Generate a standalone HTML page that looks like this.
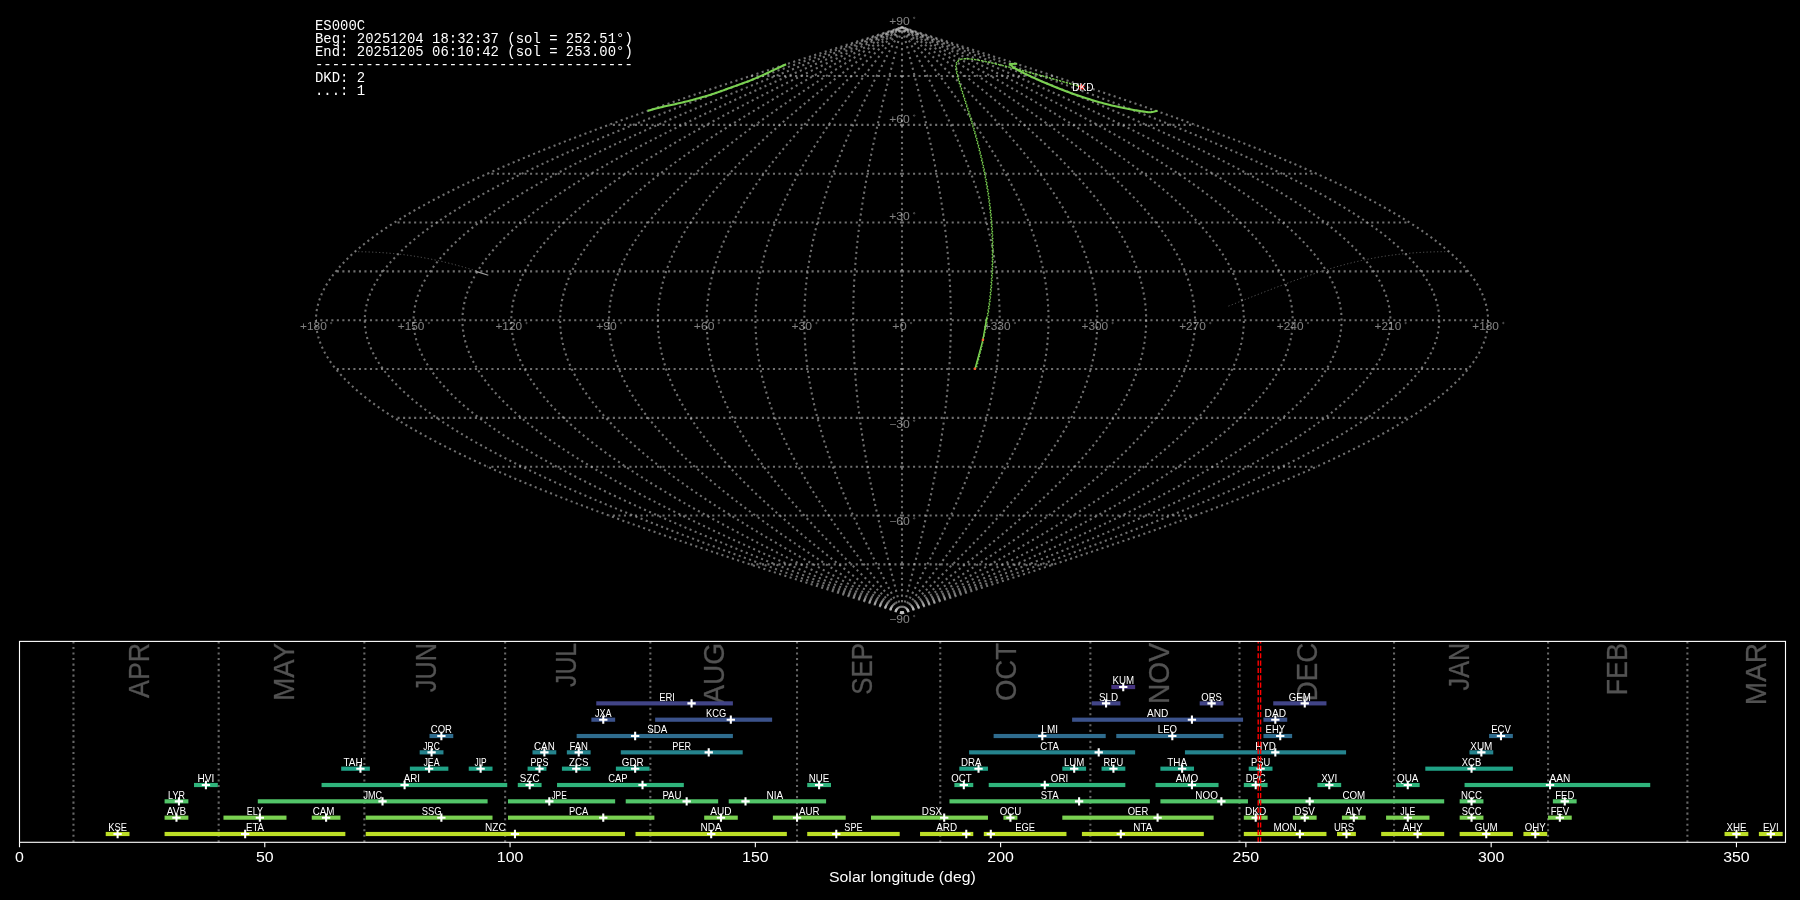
<!DOCTYPE html>
<html><head><meta charset="utf-8"><title>ES000C shower association</title>
<style>html,body{margin:0;padding:0;background:#000;width:1800px;height:900px;overflow:hidden}svg{display:block;will-change:transform}</style>
</head><body>
<svg width="1800" height="900" viewBox="0 0 1800 900">
<rect x="0" y="0" width="1800" height="900" fill="#000"/>
<g stroke="#c0c0c0" stroke-opacity="0.58" stroke-width="2.083" stroke-dasharray="2.083 3.4375" fill="none"><path d="M902.00 613.24L902.00 609.98L902.00 606.73L902.00 603.47L902.00 600.22L902.00 596.96L902.00 593.70L902.00 590.45L902.00 587.19L902.00 583.94L902.00 580.68L902.00 577.42L902.00 574.17L902.00 570.91L902.00 567.66L902.00 564.40L902.00 561.14L902.00 557.89L902.00 554.63L902.00 551.38L902.00 548.12L902.00 544.86L902.00 541.61L902.00 538.35L902.00 535.10L902.00 531.84L902.00 528.58L902.00 525.33L902.00 522.07L902.00 518.82L902.00 515.56L902.00 512.30L902.00 509.05L902.00 505.79L902.00 502.54L902.00 499.28L902.00 496.02L902.00 492.77L902.00 489.51L902.00 486.26L902.00 483.00L902.00 479.74L902.00 476.49L902.00 473.23L902.00 469.98L902.00 466.72L902.00 463.46L902.00 460.21L902.00 456.95L902.00 453.70L902.00 450.44L902.00 447.18L902.00 443.93L902.00 440.67L902.00 437.42L902.00 434.16L902.00 430.90L902.00 427.65L902.00 424.39L902.00 421.14L902.00 417.88L902.00 414.62L902.00 411.37L902.00 408.11L902.00 404.86L902.00 401.60L902.00 398.34L902.00 395.09L902.00 391.83L902.00 388.58L902.00 385.32L902.00 382.06L902.00 378.81L902.00 375.55L902.00 372.30L902.00 369.04L902.00 365.78L902.00 362.53L902.00 359.27L902.00 356.02L902.00 352.76L902.00 349.50L902.00 346.25L902.00 342.99L902.00 339.74L902.00 336.48L902.00 333.22L902.00 329.97L902.00 326.71L902.00 323.46L902.00 320.20L902.00 316.94L902.00 313.69L902.00 310.43L902.00 307.18L902.00 303.92L902.00 300.66L902.00 297.41L902.00 294.15L902.00 290.90L902.00 287.64L902.00 284.38L902.00 281.13L902.00 277.87L902.00 274.62L902.00 271.36L902.00 268.10L902.00 264.85L902.00 261.59L902.00 258.34L902.00 255.08L902.00 251.82L902.00 248.57L902.00 245.31L902.00 242.06L902.00 238.80L902.00 235.54L902.00 232.29L902.00 229.03L902.00 225.78L902.00 222.52L902.00 219.26L902.00 216.01L902.00 212.75L902.00 209.50L902.00 206.24L902.00 202.98L902.00 199.73L902.00 196.47L902.00 193.22L902.00 189.96L902.00 186.70L902.00 183.45L902.00 180.19L902.00 176.94L902.00 173.68L902.00 170.42L902.00 167.17L902.00 163.91L902.00 160.66L902.00 157.40L902.00 154.14L902.00 150.89L902.00 147.63L902.00 144.38L902.00 141.12L902.00 137.86L902.00 134.61L902.00 131.35L902.00 128.10L902.00 124.84L902.00 121.58L902.00 118.33L902.00 115.07L902.00 111.82L902.00 108.56L902.00 105.30L902.00 102.05L902.00 98.79L902.00 95.54L902.00 92.28L902.00 89.02L902.00 85.77L902.00 82.51L902.00 79.26L902.00 76.00L902.00 72.74L902.00 69.49L902.00 66.23L902.00 62.98L902.00 59.72L902.00 56.46L902.00 53.21L902.00 49.95L902.00 46.70L902.00 43.44L902.00 40.18L902.00 36.93L902.00 33.67L902.00 30.42L902.00 27.16"/><path d="M902.00 613.24L901.15 609.98L900.30 606.73L899.44 603.47L898.59 600.22L897.74 596.96L896.89 593.70L896.05 590.45L895.20 587.19L894.36 583.94L893.52 580.68L892.68 577.42L891.85 574.17L891.01 570.91L890.18 567.66L889.36 564.40L888.54 561.14L887.72 557.89L886.91 554.63L886.10 551.38L885.30 548.12L884.50 544.86L883.70 541.61L882.92 538.35L882.13 535.10L881.36 531.84L880.59 528.58L879.83 525.33L879.07 522.07L878.32 518.82L877.58 515.56L876.85 512.30L876.12 509.05L875.40 505.79L874.69 502.54L873.99 499.28L873.29 496.02L872.61 492.77L871.93 489.51L871.26 486.26L870.61 483.00L869.96 479.74L869.32 476.49L868.69 473.23L868.07 469.98L867.46 466.72L866.87 463.46L866.28 460.21L865.70 456.95L865.14 453.70L864.59 450.44L864.04 447.18L863.51 443.93L862.99 440.67L862.49 437.42L861.99 434.16L861.51 430.90L861.04 427.65L860.58 424.39L860.14 421.14L859.70 417.88L859.28 414.62L858.88 411.37L858.48 408.11L858.10 404.86L857.74 401.60L857.38 398.34L857.04 395.09L856.72 391.83L856.40 388.58L856.11 385.32L855.82 382.06L855.55 378.81L855.29 375.55L855.05 372.30L854.82 369.04L854.61 365.78L854.41 362.53L854.23 359.27L854.06 356.02L853.90 352.76L853.76 349.50L853.64 346.25L853.52 342.99L853.43 339.74L853.35 336.48L853.28 333.22L853.23 329.97L853.19 326.71L853.17 323.46L853.16 320.20L853.17 316.94L853.19 313.69L853.23 310.43L853.28 307.18L853.35 303.92L853.43 300.66L853.52 297.41L853.64 294.15L853.76 290.90L853.90 287.64L854.06 284.38L854.23 281.13L854.41 277.87L854.61 274.62L854.82 271.36L855.05 268.10L855.29 264.85L855.55 261.59L855.82 258.34L856.11 255.08L856.40 251.82L856.72 248.57L857.04 245.31L857.38 242.06L857.74 238.80L858.10 235.54L858.48 232.29L858.88 229.03L859.28 225.78L859.70 222.52L860.14 219.26L860.58 216.01L861.04 212.75L861.51 209.50L861.99 206.24L862.49 202.98L862.99 199.73L863.51 196.47L864.04 193.22L864.59 189.96L865.14 186.70L865.70 183.45L866.28 180.19L866.87 176.94L867.46 173.68L868.07 170.42L868.69 167.17L869.32 163.91L869.96 160.66L870.61 157.40L871.26 154.14L871.93 150.89L872.61 147.63L873.29 144.38L873.99 141.12L874.69 137.86L875.40 134.61L876.12 131.35L876.85 128.10L877.58 124.84L878.32 121.58L879.07 118.33L879.83 115.07L880.59 111.82L881.36 108.56L882.13 105.30L882.92 102.05L883.70 98.79L884.50 95.54L885.30 92.28L886.10 89.02L886.91 85.77L887.72 82.51L888.54 79.26L889.36 76.00L890.18 72.74L891.01 69.49L891.85 66.23L892.68 62.98L893.52 59.72L894.36 56.46L895.20 53.21L896.05 49.95L896.89 46.70L897.74 43.44L898.59 40.18L899.44 36.93L900.30 33.67L901.15 30.42L902.00 27.16"/><path d="M902.00 613.24L900.30 609.98L898.59 606.73L896.89 603.47L895.19 600.22L893.49 596.96L891.79 593.70L890.10 590.45L888.41 587.19L886.72 583.94L885.04 580.68L883.36 577.42L881.69 574.17L880.03 570.91L878.37 567.66L876.72 564.40L875.08 561.14L873.44 557.89L871.82 554.63L870.20 551.38L868.59 548.12L866.99 544.86L865.41 541.61L863.83 538.35L862.27 535.10L860.72 531.84L859.18 528.58L857.65 525.33L856.14 522.07L854.64 518.82L853.16 515.56L851.69 512.30L850.24 509.05L848.80 505.79L847.38 502.54L845.97 499.28L844.59 496.02L843.21 492.77L841.86 489.51L840.53 486.26L839.21 483.00L837.92 479.74L836.64 476.49L835.38 473.23L834.15 469.98L832.93 466.72L831.73 463.46L830.56 460.21L829.41 456.95L828.28 453.70L827.17 450.44L826.09 447.18L825.03 443.93L823.99 440.67L822.98 437.42L821.99 434.16L821.02 430.90L820.08 427.65L819.16 424.39L818.27 421.14L817.41 417.88L816.57 414.62L815.75 411.37L814.97 408.11L814.21 404.86L813.47 401.60L812.76 398.34L812.09 395.09L811.43 391.83L810.81 388.58L810.21 385.32L809.64 382.06L809.10 378.81L808.59 375.55L808.10 372.30L807.65 369.04L807.22 365.78L806.82 362.53L806.45 359.27L806.11 356.02L805.80 352.76L805.52 349.50L805.27 346.25L805.05 342.99L804.86 339.74L804.69 336.48L804.56 333.22L804.45 329.97L804.38 326.71L804.33 323.46L804.32 320.20L804.33 316.94L804.38 313.69L804.45 310.43L804.56 307.18L804.69 303.92L804.86 300.66L805.05 297.41L805.27 294.15L805.52 290.90L805.80 287.64L806.11 284.38L806.45 281.13L806.82 277.87L807.22 274.62L807.65 271.36L808.10 268.10L808.59 264.85L809.10 261.59L809.64 258.34L810.21 255.08L810.81 251.82L811.43 248.57L812.09 245.31L812.76 242.06L813.47 238.80L814.21 235.54L814.97 232.29L815.75 229.03L816.57 225.78L817.41 222.52L818.27 219.26L819.16 216.01L820.08 212.75L821.02 209.50L821.99 206.24L822.98 202.98L823.99 199.73L825.03 196.47L826.09 193.22L827.17 189.96L828.28 186.70L829.41 183.45L830.56 180.19L831.73 176.94L832.93 173.68L834.15 170.42L835.38 167.17L836.64 163.91L837.92 160.66L839.21 157.40L840.53 154.14L841.86 150.89L843.21 147.63L844.59 144.38L845.97 141.12L847.38 137.86L848.80 134.61L850.24 131.35L851.69 128.10L853.16 124.84L854.64 121.58L856.14 118.33L857.65 115.07L859.18 111.82L860.72 108.56L862.27 105.30L863.83 102.05L865.41 98.79L866.99 95.54L868.59 92.28L870.20 89.02L871.82 85.77L873.44 82.51L875.08 79.26L876.72 76.00L878.37 72.74L880.03 69.49L881.69 66.23L883.36 62.98L885.04 59.72L886.72 56.46L888.41 53.21L890.10 49.95L891.79 46.70L893.49 43.44L895.19 40.18L896.89 36.93L898.59 33.67L900.30 30.42L902.00 27.16"/><path d="M902.00 613.24L899.44 609.98L896.89 606.73L894.33 603.47L891.78 600.22L889.23 596.96L886.68 593.70L884.14 590.45L881.61 587.19L879.08 583.94L876.56 580.68L874.04 577.42L871.54 574.17L869.04 570.91L866.55 567.66L864.08 564.40L861.61 561.14L859.16 557.89L856.72 554.63L854.30 551.38L851.89 548.12L849.49 544.86L847.11 541.61L844.75 538.35L842.40 535.10L840.08 531.84L837.77 528.58L835.48 525.33L833.21 522.07L830.97 518.82L828.74 515.56L826.54 512.30L824.36 509.05L822.20 505.79L820.07 502.54L817.96 499.28L815.88 496.02L813.82 492.77L811.79 489.51L809.79 486.26L807.82 483.00L805.87 479.74L803.96 476.49L802.07 473.23L800.22 469.98L798.39 466.72L796.60 463.46L794.84 460.21L793.11 456.95L791.42 453.70L789.76 450.44L788.13 447.18L786.54 443.93L784.98 440.67L783.46 437.42L781.98 434.16L780.53 430.90L779.12 427.65L777.74 424.39L776.41 421.14L775.11 417.88L773.85 414.62L772.63 411.37L771.45 408.11L770.31 404.86L769.21 401.60L768.15 398.34L767.13 395.09L766.15 391.83L765.21 388.58L764.32 385.32L763.46 382.06L762.65 378.81L761.88 375.55L761.16 372.30L760.47 369.04L759.83 365.78L759.24 362.53L758.68 359.27L758.17 356.02L757.71 352.76L757.28 349.50L756.91 346.25L756.57 342.99L756.28 339.74L756.04 336.48L755.84 333.22L755.68 329.97L755.57 326.71L755.50 323.46L755.48 320.20L755.50 316.94L755.57 313.69L755.68 310.43L755.84 307.18L756.04 303.92L756.28 300.66L756.57 297.41L756.91 294.15L757.28 290.90L757.71 287.64L758.17 284.38L758.68 281.13L759.24 277.87L759.83 274.62L760.47 271.36L761.16 268.10L761.88 264.85L762.65 261.59L763.46 258.34L764.32 255.08L765.21 251.82L766.15 248.57L767.13 245.31L768.15 242.06L769.21 238.80L770.31 235.54L771.45 232.29L772.63 229.03L773.85 225.78L775.11 222.52L776.41 219.26L777.74 216.01L779.12 212.75L780.53 209.50L781.98 206.24L783.46 202.98L784.98 199.73L786.54 196.47L788.13 193.22L789.76 189.96L791.42 186.70L793.11 183.45L794.84 180.19L796.60 176.94L798.39 173.68L800.22 170.42L802.07 167.17L803.96 163.91L805.87 160.66L807.82 157.40L809.79 154.14L811.79 150.89L813.82 147.63L815.88 144.38L817.96 141.12L820.07 137.86L822.20 134.61L824.36 131.35L826.54 128.10L828.74 124.84L830.97 121.58L833.21 118.33L835.48 115.07L837.77 111.82L840.08 108.56L842.40 105.30L844.75 102.05L847.11 98.79L849.49 95.54L851.89 92.28L854.30 89.02L856.72 85.77L859.16 82.51L861.61 79.26L864.08 76.00L866.55 72.74L869.04 69.49L871.54 66.23L874.04 62.98L876.56 59.72L879.08 56.46L881.61 53.21L884.14 49.95L886.68 46.70L889.23 43.44L891.78 40.18L894.33 36.93L896.89 33.67L899.44 30.42L902.00 27.16"/><path d="M902.00 613.24L898.59 609.98L895.18 606.73L891.78 603.47L888.37 600.22L884.97 596.96L881.58 593.70L878.19 590.45L874.81 587.19L871.44 583.94L868.08 580.68L864.72 577.42L861.38 574.17L858.05 570.91L854.74 567.66L851.44 564.40L848.15 561.14L844.88 557.89L841.63 554.63L838.40 551.38L835.18 548.12L831.99 544.86L828.82 541.61L825.67 538.35L822.54 535.10L819.44 531.84L816.36 528.58L813.31 525.33L810.28 522.07L807.29 518.82L804.32 515.56L801.38 512.30L798.47 509.05L795.60 505.79L792.76 502.54L789.95 499.28L787.17 496.02L784.43 492.77L781.72 489.51L779.06 486.26L776.43 483.00L773.83 479.74L771.28 476.49L768.76 473.23L766.29 469.98L763.86 466.72L761.47 463.46L759.12 460.21L756.82 456.95L754.56 453.70L752.35 450.44L750.18 447.18L748.05 443.93L745.98 440.67L743.95 437.42L741.97 434.16L740.04 430.90L738.16 427.65L736.33 424.39L734.54 421.14L732.81 417.88L731.13 414.62L729.51 411.37L727.93 408.11L726.41 404.86L724.94 401.60L723.53 398.34L722.17 395.09L720.87 391.83L719.62 388.58L718.42 385.32L717.28 382.06L716.20 378.81L715.18 375.55L714.21 372.30L713.30 369.04L712.44 365.78L711.65 362.53L710.91 359.27L710.23 356.02L709.61 352.76L709.05 349.50L708.54 346.25L708.10 342.99L707.71 339.74L707.38 336.48L707.12 333.22L706.91 329.97L706.76 326.71L706.67 323.46L706.64 320.20L706.67 316.94L706.76 313.69L706.91 310.43L707.12 307.18L707.38 303.92L707.71 300.66L708.10 297.41L708.54 294.15L709.05 290.90L709.61 287.64L710.23 284.38L710.91 281.13L711.65 277.87L712.44 274.62L713.30 271.36L714.21 268.10L715.18 264.85L716.20 261.59L717.28 258.34L718.42 255.08L719.62 251.82L720.87 248.57L722.17 245.31L723.53 242.06L724.94 238.80L726.41 235.54L727.93 232.29L729.51 229.03L731.13 225.78L732.81 222.52L734.54 219.26L736.33 216.01L738.16 212.75L740.04 209.50L741.97 206.24L743.95 202.98L745.98 199.73L748.05 196.47L750.18 193.22L752.35 189.96L754.56 186.70L756.82 183.45L759.12 180.19L761.47 176.94L763.86 173.68L766.29 170.42L768.76 167.17L771.28 163.91L773.83 160.66L776.43 157.40L779.06 154.14L781.72 150.89L784.43 147.63L787.17 144.38L789.95 141.12L792.76 137.86L795.60 134.61L798.47 131.35L801.38 128.10L804.32 124.84L807.29 121.58L810.28 118.33L813.31 115.07L816.36 111.82L819.44 108.56L822.54 105.30L825.67 102.05L828.82 98.79L831.99 95.54L835.18 92.28L838.40 89.02L841.63 85.77L844.88 82.51L848.15 79.26L851.44 76.00L854.74 72.74L858.05 69.49L861.38 66.23L864.72 62.98L868.08 59.72L871.44 56.46L874.81 53.21L878.19 49.95L881.58 46.70L884.97 43.44L888.37 40.18L891.78 36.93L895.18 33.67L898.59 30.42L902.00 27.16"/><path d="M902.00 613.24L897.74 609.98L893.48 606.73L889.22 603.47L884.97 600.22L880.72 596.96L876.47 593.70L872.24 590.45L868.01 587.19L863.80 583.94L859.60 580.68L855.40 577.42L851.23 574.17L847.07 570.91L842.92 567.66L838.80 564.40L834.69 561.14L830.60 557.89L826.54 554.63L822.50 551.38L818.48 548.12L814.49 544.86L810.52 541.61L806.58 538.35L802.67 535.10L798.80 531.84L794.95 528.58L791.14 525.33L787.36 522.07L783.61 518.82L779.90 515.56L776.23 512.30L772.59 509.05L769.00 505.79L765.45 502.54L761.93 499.28L758.46 496.02L755.04 492.77L751.66 489.51L748.32 486.26L745.03 483.00L741.79 479.74L738.60 476.49L735.46 473.23L732.36 469.98L729.32 466.72L726.34 463.46L723.40 460.21L720.52 456.95L717.70 453.70L714.93 450.44L712.22 447.18L709.57 443.93L706.97 440.67L704.44 437.42L701.96 434.16L699.55 430.90L697.20 427.65L694.91 424.39L692.68 421.14L690.52 417.88L688.42 414.62L686.38 411.37L684.42 408.11L682.51 404.86L680.68 401.60L678.91 398.34L677.21 395.09L675.58 391.83L674.02 388.58L672.53 385.32L671.10 382.06L669.75 378.81L668.47 375.55L667.26 372.30L666.12 369.04L665.05 365.78L664.06 362.53L663.14 359.27L662.29 356.02L661.51 352.76L660.81 349.50L660.18 346.25L659.62 342.99L659.14 339.74L658.73 336.48L658.39 333.22L658.13 329.97L657.95 326.71L657.84 323.46L657.80 320.20L657.84 316.94L657.95 313.69L658.13 310.43L658.39 307.18L658.73 303.92L659.14 300.66L659.62 297.41L660.18 294.15L660.81 290.90L661.51 287.64L662.29 284.38L663.14 281.13L664.06 277.87L665.05 274.62L666.12 271.36L667.26 268.10L668.47 264.85L669.75 261.59L671.10 258.34L672.53 255.08L674.02 251.82L675.58 248.57L677.21 245.31L678.91 242.06L680.68 238.80L682.51 235.54L684.42 232.29L686.38 229.03L688.42 225.78L690.52 222.52L692.68 219.26L694.91 216.01L697.20 212.75L699.55 209.50L701.96 206.24L704.44 202.98L706.97 199.73L709.57 196.47L712.22 193.22L714.93 189.96L717.70 186.70L720.52 183.45L723.40 180.19L726.34 176.94L729.32 173.68L732.36 170.42L735.46 167.17L738.60 163.91L741.79 160.66L745.03 157.40L748.32 154.14L751.66 150.89L755.04 147.63L758.46 144.38L761.93 141.12L765.45 137.86L769.00 134.61L772.59 131.35L776.23 128.10L779.90 124.84L783.61 121.58L787.36 118.33L791.14 115.07L794.95 111.82L798.80 108.56L802.67 105.30L806.58 102.05L810.52 98.79L814.49 95.54L818.48 92.28L822.50 89.02L826.54 85.77L830.60 82.51L834.69 79.26L838.80 76.00L842.92 72.74L847.07 69.49L851.23 66.23L855.40 62.98L859.60 59.72L863.80 56.46L868.01 53.21L872.24 49.95L876.47 46.70L880.72 43.44L884.97 40.18L889.22 36.93L893.48 33.67L897.74 30.42L902.00 27.16"/><path d="M902.00 613.24L896.89 609.98L891.77 606.73L886.66 603.47L881.56 600.22L876.46 596.96L871.37 593.70L866.29 590.45L861.22 587.19L856.16 583.94L851.11 580.68L846.09 577.42L841.07 574.17L836.08 570.91L831.11 567.66L826.16 564.40L821.23 561.14L816.32 557.89L811.45 554.63L806.60 551.38L801.77 548.12L796.98 544.86L792.23 541.61L787.50 538.35L782.81 535.10L778.16 531.84L773.54 528.58L768.96 525.33L764.43 522.07L759.93 518.82L755.48 515.56L751.07 512.30L746.71 509.05L742.40 505.79L738.13 502.54L733.92 499.28L729.76 496.02L725.64 492.77L721.59 489.51L717.58 486.26L713.64 483.00L709.75 479.74L705.92 476.49L702.15 473.23L698.44 469.98L694.79 466.72L691.20 463.46L687.68 460.21L684.23 456.95L680.84 453.70L677.52 450.44L674.27 447.18L671.08 443.93L667.97 440.67L664.93 437.42L661.96 434.16L659.06 430.90L656.24 427.65L653.49 424.39L650.82 421.14L648.22 417.88L645.70 414.62L643.26 411.37L640.90 408.11L638.62 404.86L636.42 401.60L634.29 398.34L632.26 395.09L630.30 391.83L628.42 388.58L626.63 385.32L624.93 382.06L623.30 378.81L621.76 375.55L620.31 372.30L618.95 369.04L617.66 365.78L616.47 362.53L615.36 359.27L614.34 356.02L613.41 352.76L612.57 349.50L611.81 346.25L611.14 342.99L610.57 339.74L610.08 336.48L609.67 333.22L609.36 329.97L609.14 326.71L609.00 323.46L608.96 320.20L609.00 316.94L609.14 313.69L609.36 310.43L609.67 307.18L610.08 303.92L610.57 300.66L611.14 297.41L611.81 294.15L612.57 290.90L613.41 287.64L614.34 284.38L615.36 281.13L616.47 277.87L617.66 274.62L618.95 271.36L620.31 268.10L621.76 264.85L623.30 261.59L624.93 258.34L626.63 255.08L628.42 251.82L630.30 248.57L632.26 245.31L634.29 242.06L636.42 238.80L638.62 235.54L640.90 232.29L643.26 229.03L645.70 225.78L648.22 222.52L650.82 219.26L653.49 216.01L656.24 212.75L659.06 209.50L661.96 206.24L664.93 202.98L667.97 199.73L671.08 196.47L674.27 193.22L677.52 189.96L680.84 186.70L684.23 183.45L687.68 180.19L691.20 176.94L694.79 173.68L698.44 170.42L702.15 167.17L705.92 163.91L709.75 160.66L713.64 157.40L717.58 154.14L721.59 150.89L725.64 147.63L729.76 144.38L733.92 141.12L738.13 137.86L742.40 134.61L746.71 131.35L751.07 128.10L755.48 124.84L759.93 121.58L764.43 118.33L768.96 115.07L773.54 111.82L778.16 108.56L782.81 105.30L787.50 102.05L792.23 98.79L796.98 95.54L801.77 92.28L806.60 89.02L811.45 85.77L816.32 82.51L821.23 79.26L826.16 76.00L831.11 72.74L836.08 69.49L841.07 66.23L846.09 62.98L851.11 59.72L856.16 56.46L861.22 53.21L866.29 49.95L871.37 46.70L876.46 43.44L881.56 40.18L886.66 36.93L891.77 33.67L896.89 30.42L902.00 27.16"/><path d="M902.00 613.24L896.03 609.98L890.07 606.73L884.11 603.47L878.15 600.22L872.20 596.96L866.26 593.70L860.34 590.45L854.42 587.19L848.52 583.94L842.63 580.68L836.77 577.42L830.92 574.17L825.09 570.91L819.29 567.66L813.51 564.40L807.77 561.14L802.04 557.89L796.35 554.63L790.69 551.38L785.07 548.12L779.48 544.86L773.93 541.61L768.42 538.35L762.94 535.10L757.52 531.84L752.13 528.58L746.79 525.33L741.50 522.07L736.25 518.82L731.06 515.56L725.92 512.30L720.83 509.05L715.80 505.79L710.82 502.54L705.91 499.28L701.05 496.02L696.25 492.77L691.52 489.51L686.85 486.26L682.24 483.00L677.71 479.74L673.24 476.49L668.84 473.23L664.51 469.98L660.25 466.72L656.07 463.46L651.96 460.21L647.93 456.95L643.98 453.70L640.10 450.44L636.31 447.18L632.59 443.93L628.96 440.67L625.41 437.42L621.95 434.16L618.57 430.90L615.28 427.65L612.07 424.39L608.95 421.14L605.92 417.88L602.99 414.62L600.14 411.37L597.38 408.11L594.72 404.86L592.15 401.60L589.68 398.34L587.30 395.09L585.01 391.83L582.83 388.58L580.74 385.32L578.75 382.06L576.85 378.81L575.06 375.55L573.36 372.30L571.77 369.04L570.28 365.78L568.88 362.53L567.59 359.27L566.40 356.02L565.31 352.76L564.33 349.50L563.45 346.25L562.67 342.99L561.99 339.74L561.42 336.48L560.95 333.22L560.59 329.97L560.33 326.71L560.17 323.46L560.12 320.20L560.17 316.94L560.33 313.69L560.59 310.43L560.95 307.18L561.42 303.92L561.99 300.66L562.67 297.41L563.45 294.15L564.33 290.90L565.31 287.64L566.40 284.38L567.59 281.13L568.88 277.87L570.28 274.62L571.77 271.36L573.36 268.10L575.06 264.85L576.85 261.59L578.75 258.34L580.74 255.08L582.83 251.82L585.01 248.57L587.30 245.31L589.68 242.06L592.15 238.80L594.72 235.54L597.38 232.29L600.14 229.03L602.99 225.78L605.92 222.52L608.95 219.26L612.07 216.01L615.28 212.75L618.57 209.50L621.95 206.24L625.41 202.98L628.96 199.73L632.59 196.47L636.31 193.22L640.10 189.96L643.98 186.70L647.93 183.45L651.96 180.19L656.07 176.94L660.25 173.68L664.51 170.42L668.84 167.17L673.24 163.91L677.71 160.66L682.24 157.40L686.85 154.14L691.52 150.89L696.25 147.63L701.05 144.38L705.91 141.12L710.82 137.86L715.80 134.61L720.83 131.35L725.92 128.10L731.06 124.84L736.25 121.58L741.50 118.33L746.79 115.07L752.13 111.82L757.52 108.56L762.94 105.30L768.42 102.05L773.93 98.79L779.48 95.54L785.07 92.28L790.69 89.02L796.35 85.77L802.04 82.51L807.77 79.26L813.51 76.00L819.29 72.74L825.09 69.49L830.92 66.23L836.77 62.98L842.63 59.72L848.52 56.46L854.42 53.21L860.34 49.95L866.26 46.70L872.20 43.44L878.15 40.18L884.11 36.93L890.07 33.67L896.03 30.42L902.00 27.16"/><path d="M902.00 613.24L895.18 609.98L888.36 606.73L881.55 603.47L874.74 600.22L867.95 596.96L861.16 593.70L854.38 590.45L847.62 587.19L840.88 583.94L834.15 580.68L827.45 577.42L820.76 574.17L814.11 570.91L807.48 567.66L800.87 564.40L794.30 561.14L787.76 557.89L781.26 554.63L774.79 551.38L768.37 548.12L761.98 544.86L755.63 541.61L749.33 538.35L743.08 535.10L736.87 531.84L730.72 528.58L724.62 525.33L718.57 522.07L712.58 518.82L706.64 515.56L700.76 512.30L694.95 509.05L689.20 505.79L683.51 502.54L677.89 499.28L672.34 496.02L666.86 492.77L661.45 489.51L656.11 486.26L650.85 483.00L645.66 479.74L640.56 476.49L635.53 473.23L630.58 469.98L625.72 466.72L620.94 463.46L616.25 460.21L611.64 456.95L607.12 453.70L602.69 450.44L598.35 447.18L594.11 443.93L589.96 440.67L585.90 437.42L581.94 434.16L578.08 430.90L574.31 427.65L570.65 424.39L567.09 421.14L563.63 417.88L560.27 414.62L557.01 411.37L553.87 408.11L550.82 404.86L547.89 401.60L545.06 398.34L542.34 395.09L539.73 391.83L537.23 388.58L534.84 385.32L532.57 382.06L530.40 378.81L528.35 375.55L526.42 372.30L524.59 369.04L522.89 365.78L521.29 362.53L519.82 359.27L518.46 356.02L517.22 352.76L516.09 349.50L515.08 346.25L514.19 342.99L513.42 339.74L512.77 336.48L512.23 333.22L511.82 329.97L511.52 326.71L511.34 323.46L511.28 320.20L511.34 316.94L511.52 313.69L511.82 310.43L512.23 307.18L512.77 303.92L513.42 300.66L514.19 297.41L515.08 294.15L516.09 290.90L517.22 287.64L518.46 284.38L519.82 281.13L521.29 277.87L522.89 274.62L524.59 271.36L526.42 268.10L528.35 264.85L530.40 261.59L532.57 258.34L534.84 255.08L537.23 251.82L539.73 248.57L542.34 245.31L545.06 242.06L547.89 238.80L550.82 235.54L553.87 232.29L557.01 229.03L560.27 225.78L563.63 222.52L567.09 219.26L570.65 216.01L574.31 212.75L578.08 209.50L581.94 206.24L585.90 202.98L589.96 199.73L594.11 196.47L598.35 193.22L602.69 189.96L607.12 186.70L611.64 183.45L616.25 180.19L620.94 176.94L625.72 173.68L630.58 170.42L635.53 167.17L640.56 163.91L645.66 160.66L650.85 157.40L656.11 154.14L661.45 150.89L666.86 147.63L672.34 144.38L677.89 141.12L683.51 137.86L689.20 134.61L694.95 131.35L700.76 128.10L706.64 124.84L712.58 121.58L718.57 118.33L724.62 115.07L730.72 111.82L736.87 108.56L743.08 105.30L749.33 102.05L755.63 98.79L761.98 95.54L768.37 92.28L774.79 89.02L781.26 85.77L787.76 82.51L794.30 79.26L800.87 76.00L807.48 72.74L814.11 69.49L820.76 66.23L827.45 62.98L834.15 59.72L840.88 56.46L847.62 53.21L854.38 49.95L861.16 46.70L867.95 43.44L874.74 40.18L881.55 36.93L888.36 33.67L895.18 30.42L902.00 27.16"/><path d="M902.00 613.24L894.33 609.98L886.66 606.73L879.00 603.47L871.34 600.22L863.69 596.96L856.05 593.70L848.43 590.45L840.83 587.19L833.24 583.94L825.67 580.68L818.13 577.42L810.61 574.17L803.12 570.91L795.66 567.66L788.23 564.40L780.84 561.14L773.49 557.89L766.17 554.63L758.89 551.38L751.66 548.12L744.48 544.86L737.34 541.61L730.25 538.35L723.21 535.10L716.23 531.84L709.31 528.58L702.44 525.33L695.64 522.07L688.90 518.82L682.22 515.56L675.61 512.30L669.07 509.05L662.60 505.79L656.20 502.54L649.88 499.28L643.63 496.02L637.47 492.77L631.38 489.51L625.38 486.26L619.46 483.00L613.62 479.74L607.88 476.49L602.22 473.23L596.66 469.98L591.18 466.72L585.81 463.46L580.53 460.21L575.34 456.95L570.26 453.70L565.28 450.44L560.40 447.18L555.62 443.93L550.95 440.67L546.39 437.42L541.93 434.16L537.59 430.90L533.35 427.65L529.23 424.39L525.22 421.14L521.33 417.88L517.55 414.62L513.89 411.37L510.35 408.11L506.93 404.86L503.62 401.60L500.44 398.34L497.38 395.09L494.45 391.83L491.64 388.58L488.95 385.32L486.39 382.06L483.95 378.81L481.65 375.55L479.47 372.30L477.42 369.04L475.50 365.78L473.71 362.53L472.05 359.27L470.52 356.02L469.12 352.76L467.85 349.50L466.72 346.25L465.72 342.99L464.85 339.74L464.11 336.48L463.51 333.22L463.04 329.97L462.71 326.71L462.51 323.46L462.44 320.20L462.51 316.94L462.71 313.69L463.04 310.43L463.51 307.18L464.11 303.92L464.85 300.66L465.72 297.41L466.72 294.15L467.85 290.90L469.12 287.64L470.52 284.38L472.05 281.13L473.71 277.87L475.50 274.62L477.42 271.36L479.47 268.10L481.65 264.85L483.95 261.59L486.39 258.34L488.95 255.08L491.64 251.82L494.45 248.57L497.38 245.31L500.44 242.06L503.62 238.80L506.93 235.54L510.35 232.29L513.89 229.03L517.55 225.78L521.33 222.52L525.22 219.26L529.23 216.01L533.35 212.75L537.59 209.50L541.93 206.24L546.39 202.98L550.95 199.73L555.62 196.47L560.40 193.22L565.28 189.96L570.26 186.70L575.34 183.45L580.53 180.19L585.81 176.94L591.18 173.68L596.66 170.42L602.22 167.17L607.88 163.91L613.62 160.66L619.46 157.40L625.38 154.14L631.38 150.89L637.47 147.63L643.63 144.38L649.88 141.12L656.20 137.86L662.60 134.61L669.07 131.35L675.61 128.10L682.22 124.84L688.90 121.58L695.64 118.33L702.44 115.07L709.31 111.82L716.23 108.56L723.21 105.30L730.25 102.05L737.34 98.79L744.48 95.54L751.66 92.28L758.89 89.02L766.17 85.77L773.49 82.51L780.84 79.26L788.23 76.00L795.66 72.74L803.12 69.49L810.61 66.23L818.13 62.98L825.67 59.72L833.24 56.46L840.83 53.21L848.43 49.95L856.05 46.70L863.69 43.44L871.34 40.18L879.00 36.93L886.66 33.67L894.33 30.42L902.00 27.16"/><path d="M902.00 613.24L893.48 609.98L884.96 606.73L876.44 603.47L867.93 600.22L859.43 596.96L850.95 593.70L842.48 590.45L834.03 587.19L825.60 583.94L817.19 580.68L808.81 577.42L800.46 574.17L792.13 570.91L783.85 567.66L775.59 564.40L767.38 561.14L759.21 557.89L751.08 554.63L742.99 551.38L734.96 548.12L726.97 544.86L719.04 541.61L711.17 538.35L703.35 535.10L695.59 531.84L687.90 528.58L680.27 525.33L672.71 522.07L665.22 518.82L657.80 515.56L650.46 512.30L643.19 509.05L636.00 505.79L628.89 502.54L621.87 499.28L614.93 496.02L608.07 492.77L601.31 489.51L594.64 486.26L588.06 483.00L581.58 479.74L575.20 476.49L568.91 473.23L562.73 469.98L556.65 466.72L550.67 463.46L544.81 460.21L539.05 456.95L533.40 453.70L527.86 450.44L522.44 447.18L517.14 443.93L511.95 440.67L506.88 437.42L501.93 434.16L497.10 430.90L492.39 427.65L487.81 424.39L483.36 421.14L479.03 417.88L474.84 414.62L470.77 411.37L466.83 408.11L463.03 404.86L459.36 401.60L455.82 398.34L452.43 395.09L449.16 391.83L446.04 388.58L443.05 385.32L440.21 382.06L437.50 378.81L434.94 375.55L432.52 372.30L430.24 369.04L428.11 365.78L426.12 362.53L424.27 359.27L422.57 356.02L421.02 352.76L419.61 349.50L418.35 346.25L417.24 342.99L416.28 339.74L415.46 336.48L414.79 333.22L414.27 329.97L413.90 326.71L413.67 323.46L413.60 320.20L413.67 316.94L413.90 313.69L414.27 310.43L414.79 307.18L415.46 303.92L416.28 300.66L417.24 297.41L418.35 294.15L419.61 290.90L421.02 287.64L422.57 284.38L424.27 281.13L426.12 277.87L428.11 274.62L430.24 271.36L432.52 268.10L434.94 264.85L437.50 261.59L440.21 258.34L443.05 255.08L446.04 251.82L449.16 248.57L452.43 245.31L455.82 242.06L459.36 238.80L463.03 235.54L466.83 232.29L470.77 229.03L474.84 225.78L479.03 222.52L483.36 219.26L487.81 216.01L492.39 212.75L497.10 209.50L501.93 206.24L506.88 202.98L511.95 199.73L517.14 196.47L522.44 193.22L527.86 189.96L533.40 186.70L539.05 183.45L544.81 180.19L550.67 176.94L556.65 173.68L562.73 170.42L568.91 167.17L575.20 163.91L581.58 160.66L588.06 157.40L594.64 154.14L601.31 150.89L608.07 147.63L614.93 144.38L621.87 141.12L628.89 137.86L636.00 134.61L643.19 131.35L650.46 128.10L657.80 124.84L665.22 121.58L672.71 118.33L680.27 115.07L687.90 111.82L695.59 108.56L703.35 105.30L711.17 102.05L719.04 98.79L726.97 95.54L734.96 92.28L742.99 89.02L751.08 85.77L759.21 82.51L767.38 79.26L775.59 76.00L783.85 72.74L792.13 69.49L800.46 66.23L808.81 62.98L817.19 59.72L825.60 56.46L834.03 53.21L842.48 49.95L850.95 46.70L859.43 43.44L867.93 40.18L876.44 36.93L884.96 33.67L893.48 30.42L902.00 27.16"/><path d="M902.00 613.24L892.62 609.98L883.25 606.73L873.88 603.47L864.52 600.22L855.18 596.96L845.84 593.70L836.53 590.45L827.23 587.19L817.96 583.94L808.71 580.68L799.49 577.42L790.30 574.17L781.15 570.91L772.03 567.66L762.95 564.40L753.92 561.14L744.93 557.89L735.98 554.63L727.09 551.38L718.25 548.12L709.47 544.86L700.75 541.61L692.08 538.35L683.48 535.10L674.95 531.84L666.49 528.58L658.10 525.33L649.78 522.07L641.54 518.82L633.38 515.56L625.30 512.30L617.31 509.05L609.40 505.79L601.58 502.54L593.85 499.28L586.22 496.02L578.68 492.77L571.24 489.51L563.90 486.26L556.67 483.00L549.54 479.74L542.52 476.49L535.60 473.23L528.80 469.98L522.11 466.72L515.54 463.46L509.09 460.21L502.75 456.95L496.54 453.70L490.45 450.44L484.49 447.18L478.65 443.93L472.94 440.67L467.36 437.42L461.92 434.16L456.61 430.90L451.43 427.65L446.39 424.39L441.50 421.14L436.74 417.88L432.12 414.62L427.65 411.37L423.32 408.11L419.13 404.86L415.10 401.60L411.21 398.34L407.47 395.09L403.88 391.83L400.44 388.58L397.16 385.32L394.03 382.06L391.05 378.81L388.23 375.55L385.57 372.30L383.07 369.04L380.72 365.78L378.53 362.53L376.50 359.27L374.63 356.02L372.92 352.76L371.37 349.50L369.99 346.25L368.76 342.99L367.70 339.74L366.80 336.48L366.07 333.22L365.50 329.97L365.09 326.71L364.84 323.46L364.76 320.20L364.84 316.94L365.09 313.69L365.50 310.43L366.07 307.18L366.80 303.92L367.70 300.66L368.76 297.41L369.99 294.15L371.37 290.90L372.92 287.64L374.63 284.38L376.50 281.13L378.53 277.87L380.72 274.62L383.07 271.36L385.57 268.10L388.23 264.85L391.05 261.59L394.03 258.34L397.16 255.08L400.44 251.82L403.88 248.57L407.47 245.31L411.21 242.06L415.10 238.80L419.13 235.54L423.32 232.29L427.65 229.03L432.12 225.78L436.74 222.52L441.50 219.26L446.39 216.01L451.43 212.75L456.61 209.50L461.92 206.24L467.36 202.98L472.94 199.73L478.65 196.47L484.49 193.22L490.45 189.96L496.54 186.70L502.75 183.45L509.09 180.19L515.54 176.94L522.11 173.68L528.80 170.42L535.60 167.17L542.52 163.91L549.54 160.66L556.67 157.40L563.90 154.14L571.24 150.89L578.68 147.63L586.22 144.38L593.85 141.12L601.58 137.86L609.40 134.61L617.31 131.35L625.30 128.10L633.38 124.84L641.54 121.58L649.78 118.33L658.10 115.07L666.49 111.82L674.95 108.56L683.48 105.30L692.08 102.05L700.75 98.79L709.47 95.54L718.25 92.28L727.09 89.02L735.98 85.77L744.93 82.51L753.92 79.26L762.95 76.00L772.03 72.74L781.15 69.49L790.30 66.23L799.49 62.98L808.71 59.72L817.96 56.46L827.23 53.21L836.53 49.95L845.84 46.70L855.18 43.44L864.52 40.18L873.88 36.93L883.25 33.67L892.62 30.42L902.00 27.16"/><path d="M902.00 613.24L891.77 609.98L881.55 606.73L871.33 603.47L861.12 600.22L850.92 596.96L840.74 593.70L830.57 590.45L820.43 587.19L810.32 583.94L800.23 580.68L790.17 577.42L780.15 574.17L770.16 570.91L760.21 567.66L750.31 564.40L740.45 561.14L730.65 557.89L720.89 554.63L711.19 551.38L701.55 548.12L691.97 544.86L682.45 541.61L673.00 538.35L663.62 535.10L654.31 531.84L645.08 528.58L635.93 525.33L626.85 522.07L617.86 518.82L608.96 515.56L600.15 512.30L591.42 509.05L582.80 505.79L574.27 502.54L565.84 499.28L557.51 496.02L549.29 492.77L541.17 489.51L533.17 486.26L525.28 483.00L517.50 479.74L509.84 476.49L502.29 473.23L494.87 469.98L487.58 466.72L480.41 463.46L473.37 460.21L466.46 456.95L459.68 453.70L453.04 450.44L446.53 447.18L440.16 443.93L433.94 440.67L427.85 437.42L421.91 434.16L416.12 430.90L410.47 427.65L404.98 424.39L399.63 421.14L394.44 417.88L389.40 414.62L384.52 411.37L379.80 408.11L375.23 404.86L370.83 401.60L366.59 398.34L362.51 395.09L358.60 391.83L354.85 388.58L351.26 385.32L347.85 382.06L344.60 378.81L341.53 375.55L338.62 372.30L335.89 369.04L333.33 365.78L330.94 362.53L328.73 359.27L326.69 356.02L324.82 352.76L323.14 349.50L321.62 346.25L320.29 342.99L319.13 339.74L318.15 336.48L317.35 333.22L316.72 329.97L316.28 326.71L316.01 323.46L315.92 320.20L316.01 316.94L316.28 313.69L316.72 310.43L317.35 307.18L318.15 303.92L319.13 300.66L320.29 297.41L321.62 294.15L323.14 290.90L324.82 287.64L326.69 284.38L328.73 281.13L330.94 277.87L333.33 274.62L335.89 271.36L338.62 268.10L341.53 264.85L344.60 261.59L347.85 258.34L351.26 255.08L354.85 251.82L358.60 248.57L362.51 245.31L366.59 242.06L370.83 238.80L375.23 235.54L379.80 232.29L384.52 229.03L389.40 225.78L394.44 222.52L399.63 219.26L404.98 216.01L410.47 212.75L416.12 209.50L421.91 206.24L427.85 202.98L433.94 199.73L440.16 196.47L446.53 193.22L453.04 189.96L459.68 186.70L466.46 183.45L473.37 180.19L480.41 176.94L487.58 173.68L494.87 170.42L502.29 167.17L509.84 163.91L517.50 160.66L525.28 157.40L533.17 154.14L541.17 150.89L549.29 147.63L557.51 144.38L565.84 141.12L574.27 137.86L582.80 134.61L591.42 131.35L600.15 128.10L608.96 124.84L617.86 121.58L626.85 118.33L635.93 115.07L645.08 111.82L654.31 108.56L663.62 105.30L673.00 102.05L682.45 98.79L691.97 95.54L701.55 92.28L711.19 89.02L720.89 85.77L730.65 82.51L740.45 79.26L750.31 76.00L760.21 72.74L770.16 69.49L780.15 66.23L790.17 62.98L800.23 59.72L810.32 56.46L820.43 53.21L830.57 49.95L840.74 46.70L850.92 43.44L861.12 40.18L871.33 36.93L881.55 33.67L891.77 30.42L902.00 27.16"/><path d="M902.00 613.24L911.38 609.98L920.75 606.73L930.12 603.47L939.48 600.22L948.82 596.96L958.16 593.70L967.47 590.45L976.77 587.19L986.04 583.94L995.29 580.68L1004.51 577.42L1013.70 574.17L1022.85 570.91L1031.97 567.66L1041.05 564.40L1050.08 561.14L1059.07 557.89L1068.02 554.63L1076.91 551.38L1085.75 548.12L1094.53 544.86L1103.25 541.61L1111.92 538.35L1120.52 535.10L1129.05 531.84L1137.51 528.58L1145.90 525.33L1154.22 522.07L1162.46 518.82L1170.62 515.56L1178.70 512.30L1186.69 509.05L1194.60 505.79L1202.42 502.54L1210.15 499.28L1217.78 496.02L1225.32 492.77L1232.76 489.51L1240.10 486.26L1247.33 483.00L1254.46 479.74L1261.48 476.49L1268.40 473.23L1275.20 469.98L1281.89 466.72L1288.46 463.46L1294.91 460.21L1301.25 456.95L1307.46 453.70L1313.55 450.44L1319.51 447.18L1325.35 443.93L1331.06 440.67L1336.64 437.42L1342.08 434.16L1347.39 430.90L1352.57 427.65L1357.61 424.39L1362.50 421.14L1367.26 417.88L1371.88 414.62L1376.35 411.37L1380.68 408.11L1384.87 404.86L1388.90 401.60L1392.79 398.34L1396.53 395.09L1400.12 391.83L1403.56 388.58L1406.84 385.32L1409.97 382.06L1412.95 378.81L1415.77 375.55L1418.43 372.30L1420.93 369.04L1423.28 365.78L1425.47 362.53L1427.50 359.27L1429.37 356.02L1431.08 352.76L1432.63 349.50L1434.01 346.25L1435.24 342.99L1436.30 339.74L1437.20 336.48L1437.93 333.22L1438.50 329.97L1438.91 326.71L1439.16 323.46L1439.24 320.20L1439.16 316.94L1438.91 313.69L1438.50 310.43L1437.93 307.18L1437.20 303.92L1436.30 300.66L1435.24 297.41L1434.01 294.15L1432.63 290.90L1431.08 287.64L1429.37 284.38L1427.50 281.13L1425.47 277.87L1423.28 274.62L1420.93 271.36L1418.43 268.10L1415.77 264.85L1412.95 261.59L1409.97 258.34L1406.84 255.08L1403.56 251.82L1400.12 248.57L1396.53 245.31L1392.79 242.06L1388.90 238.80L1384.87 235.54L1380.68 232.29L1376.35 229.03L1371.88 225.78L1367.26 222.52L1362.50 219.26L1357.61 216.01L1352.57 212.75L1347.39 209.50L1342.08 206.24L1336.64 202.98L1331.06 199.73L1325.35 196.47L1319.51 193.22L1313.55 189.96L1307.46 186.70L1301.25 183.45L1294.91 180.19L1288.46 176.94L1281.89 173.68L1275.20 170.42L1268.40 167.17L1261.48 163.91L1254.46 160.66L1247.33 157.40L1240.10 154.14L1232.76 150.89L1225.32 147.63L1217.78 144.38L1210.15 141.12L1202.42 137.86L1194.60 134.61L1186.69 131.35L1178.70 128.10L1170.62 124.84L1162.46 121.58L1154.22 118.33L1145.90 115.07L1137.51 111.82L1129.05 108.56L1120.52 105.30L1111.92 102.05L1103.25 98.79L1094.53 95.54L1085.75 92.28L1076.91 89.02L1068.02 85.77L1059.07 82.51L1050.08 79.26L1041.05 76.00L1031.97 72.74L1022.85 69.49L1013.70 66.23L1004.51 62.98L995.29 59.72L986.04 56.46L976.77 53.21L967.47 49.95L958.16 46.70L948.82 43.44L939.48 40.18L930.12 36.93L920.75 33.67L911.38 30.42L902.00 27.16"/><path d="M902.00 613.24L910.52 609.98L919.04 606.73L927.56 603.47L936.07 600.22L944.57 596.96L953.05 593.70L961.52 590.45L969.97 587.19L978.40 583.94L986.81 580.68L995.19 577.42L1003.54 574.17L1011.87 570.91L1020.15 567.66L1028.41 564.40L1036.62 561.14L1044.79 557.89L1052.92 554.63L1061.01 551.38L1069.04 548.12L1077.03 544.86L1084.96 541.61L1092.83 538.35L1100.65 535.10L1108.41 531.84L1116.10 528.58L1123.73 525.33L1131.29 522.07L1138.78 518.82L1146.20 515.56L1153.54 512.30L1160.81 509.05L1168.00 505.79L1175.11 502.54L1182.13 499.28L1189.07 496.02L1195.93 492.77L1202.69 489.51L1209.36 486.26L1215.94 483.00L1222.42 479.74L1228.80 476.49L1235.09 473.23L1241.27 469.98L1247.35 466.72L1253.33 463.46L1259.19 460.21L1264.95 456.95L1270.60 453.70L1276.14 450.44L1281.56 447.18L1286.86 443.93L1292.05 440.67L1297.12 437.42L1302.07 434.16L1306.90 430.90L1311.61 427.65L1316.19 424.39L1320.64 421.14L1324.97 417.88L1329.16 414.62L1333.23 411.37L1337.17 408.11L1340.97 404.86L1344.64 401.60L1348.18 398.34L1351.57 395.09L1354.84 391.83L1357.96 388.58L1360.95 385.32L1363.79 382.06L1366.50 378.81L1369.06 375.55L1371.48 372.30L1373.76 369.04L1375.89 365.78L1377.88 362.53L1379.73 359.27L1381.43 356.02L1382.98 352.76L1384.39 349.50L1385.65 346.25L1386.76 342.99L1387.72 339.74L1388.54 336.48L1389.21 333.22L1389.73 329.97L1390.10 326.71L1390.33 323.46L1390.40 320.20L1390.33 316.94L1390.10 313.69L1389.73 310.43L1389.21 307.18L1388.54 303.92L1387.72 300.66L1386.76 297.41L1385.65 294.15L1384.39 290.90L1382.98 287.64L1381.43 284.38L1379.73 281.13L1377.88 277.87L1375.89 274.62L1373.76 271.36L1371.48 268.10L1369.06 264.85L1366.50 261.59L1363.79 258.34L1360.95 255.08L1357.96 251.82L1354.84 248.57L1351.57 245.31L1348.18 242.06L1344.64 238.80L1340.97 235.54L1337.17 232.29L1333.23 229.03L1329.16 225.78L1324.97 222.52L1320.64 219.26L1316.19 216.01L1311.61 212.75L1306.90 209.50L1302.07 206.24L1297.12 202.98L1292.05 199.73L1286.86 196.47L1281.56 193.22L1276.14 189.96L1270.60 186.70L1264.95 183.45L1259.19 180.19L1253.33 176.94L1247.35 173.68L1241.27 170.42L1235.09 167.17L1228.80 163.91L1222.42 160.66L1215.94 157.40L1209.36 154.14L1202.69 150.89L1195.93 147.63L1189.07 144.38L1182.13 141.12L1175.11 137.86L1168.00 134.61L1160.81 131.35L1153.54 128.10L1146.20 124.84L1138.78 121.58L1131.29 118.33L1123.73 115.07L1116.10 111.82L1108.41 108.56L1100.65 105.30L1092.83 102.05L1084.96 98.79L1077.03 95.54L1069.04 92.28L1061.01 89.02L1052.92 85.77L1044.79 82.51L1036.62 79.26L1028.41 76.00L1020.15 72.74L1011.87 69.49L1003.54 66.23L995.19 62.98L986.81 59.72L978.40 56.46L969.97 53.21L961.52 49.95L953.05 46.70L944.57 43.44L936.07 40.18L927.56 36.93L919.04 33.67L910.52 30.42L902.00 27.16"/><path d="M902.00 613.24L909.67 609.98L917.34 606.73L925.00 603.47L932.66 600.22L940.31 596.96L947.95 593.70L955.57 590.45L963.17 587.19L970.76 583.94L978.33 580.68L985.87 577.42L993.39 574.17L1000.88 570.91L1008.34 567.66L1015.77 564.40L1023.16 561.14L1030.51 557.89L1037.83 554.63L1045.11 551.38L1052.34 548.12L1059.52 544.86L1066.66 541.61L1073.75 538.35L1080.79 535.10L1087.77 531.84L1094.69 528.58L1101.56 525.33L1108.36 522.07L1115.10 518.82L1121.78 515.56L1128.39 512.30L1134.93 509.05L1141.40 505.79L1147.80 502.54L1154.12 499.28L1160.37 496.02L1166.53 492.77L1172.62 489.51L1178.62 486.26L1184.54 483.00L1190.38 479.74L1196.12 476.49L1201.78 473.23L1207.34 469.98L1212.82 466.72L1218.19 463.46L1223.47 460.21L1228.66 456.95L1233.74 453.70L1238.72 450.44L1243.60 447.18L1248.38 443.93L1253.05 440.67L1257.61 437.42L1262.07 434.16L1266.41 430.90L1270.65 427.65L1274.77 424.39L1278.78 421.14L1282.67 417.88L1286.45 414.62L1290.11 411.37L1293.65 408.11L1297.07 404.86L1300.38 401.60L1303.56 398.34L1306.62 395.09L1309.55 391.83L1312.36 388.58L1315.05 385.32L1317.61 382.06L1320.05 378.81L1322.35 375.55L1324.53 372.30L1326.58 369.04L1328.50 365.78L1330.29 362.53L1331.95 359.27L1333.48 356.02L1334.88 352.76L1336.15 349.50L1337.28 346.25L1338.28 342.99L1339.15 339.74L1339.89 336.48L1340.49 333.22L1340.96 329.97L1341.29 326.71L1341.49 323.46L1341.56 320.20L1341.49 316.94L1341.29 313.69L1340.96 310.43L1340.49 307.18L1339.89 303.92L1339.15 300.66L1338.28 297.41L1337.28 294.15L1336.15 290.90L1334.88 287.64L1333.48 284.38L1331.95 281.13L1330.29 277.87L1328.50 274.62L1326.58 271.36L1324.53 268.10L1322.35 264.85L1320.05 261.59L1317.61 258.34L1315.05 255.08L1312.36 251.82L1309.55 248.57L1306.62 245.31L1303.56 242.06L1300.38 238.80L1297.07 235.54L1293.65 232.29L1290.11 229.03L1286.45 225.78L1282.67 222.52L1278.78 219.26L1274.77 216.01L1270.65 212.75L1266.41 209.50L1262.07 206.24L1257.61 202.98L1253.05 199.73L1248.38 196.47L1243.60 193.22L1238.72 189.96L1233.74 186.70L1228.66 183.45L1223.47 180.19L1218.19 176.94L1212.82 173.68L1207.34 170.42L1201.78 167.17L1196.12 163.91L1190.38 160.66L1184.54 157.40L1178.62 154.14L1172.62 150.89L1166.53 147.63L1160.37 144.38L1154.12 141.12L1147.80 137.86L1141.40 134.61L1134.93 131.35L1128.39 128.10L1121.78 124.84L1115.10 121.58L1108.36 118.33L1101.56 115.07L1094.69 111.82L1087.77 108.56L1080.79 105.30L1073.75 102.05L1066.66 98.79L1059.52 95.54L1052.34 92.28L1045.11 89.02L1037.83 85.77L1030.51 82.51L1023.16 79.26L1015.77 76.00L1008.34 72.74L1000.88 69.49L993.39 66.23L985.87 62.98L978.33 59.72L970.76 56.46L963.17 53.21L955.57 49.95L947.95 46.70L940.31 43.44L932.66 40.18L925.00 36.93L917.34 33.67L909.67 30.42L902.00 27.16"/><path d="M902.00 613.24L908.82 609.98L915.64 606.73L922.45 603.47L929.26 600.22L936.05 596.96L942.84 593.70L949.62 590.45L956.38 587.19L963.12 583.94L969.85 580.68L976.55 577.42L983.24 574.17L989.89 570.91L996.52 567.66L1003.13 564.40L1009.70 561.14L1016.24 557.89L1022.74 554.63L1029.21 551.38L1035.63 548.12L1042.02 544.86L1048.37 541.61L1054.67 538.35L1060.92 535.10L1067.13 531.84L1073.28 528.58L1079.38 525.33L1085.43 522.07L1091.42 518.82L1097.36 515.56L1103.24 512.30L1109.05 509.05L1114.80 505.79L1120.49 502.54L1126.11 499.28L1131.66 496.02L1137.14 492.77L1142.55 489.51L1147.89 486.26L1153.15 483.00L1158.34 479.74L1163.44 476.49L1168.47 473.23L1173.42 469.98L1178.28 466.72L1183.06 463.46L1187.75 460.21L1192.36 456.95L1196.88 453.70L1201.31 450.44L1205.65 447.18L1209.89 443.93L1214.04 440.67L1218.10 437.42L1222.06 434.16L1225.92 430.90L1229.69 427.65L1233.35 424.39L1236.91 421.14L1240.37 417.88L1243.73 414.62L1246.99 411.37L1250.13 408.11L1253.18 404.86L1256.11 401.60L1258.94 398.34L1261.66 395.09L1264.27 391.83L1266.77 388.58L1269.16 385.32L1271.43 382.06L1273.60 378.81L1275.65 375.55L1277.58 372.30L1279.41 369.04L1281.11 365.78L1282.71 362.53L1284.18 359.27L1285.54 356.02L1286.78 352.76L1287.91 349.50L1288.92 346.25L1289.81 342.99L1290.58 339.74L1291.23 336.48L1291.77 333.22L1292.18 329.97L1292.48 326.71L1292.66 323.46L1292.72 320.20L1292.66 316.94L1292.48 313.69L1292.18 310.43L1291.77 307.18L1291.23 303.92L1290.58 300.66L1289.81 297.41L1288.92 294.15L1287.91 290.90L1286.78 287.64L1285.54 284.38L1284.18 281.13L1282.71 277.87L1281.11 274.62L1279.41 271.36L1277.58 268.10L1275.65 264.85L1273.60 261.59L1271.43 258.34L1269.16 255.08L1266.77 251.82L1264.27 248.57L1261.66 245.31L1258.94 242.06L1256.11 238.80L1253.18 235.54L1250.13 232.29L1246.99 229.03L1243.73 225.78L1240.37 222.52L1236.91 219.26L1233.35 216.01L1229.69 212.75L1225.92 209.50L1222.06 206.24L1218.10 202.98L1214.04 199.73L1209.89 196.47L1205.65 193.22L1201.31 189.96L1196.88 186.70L1192.36 183.45L1187.75 180.19L1183.06 176.94L1178.28 173.68L1173.42 170.42L1168.47 167.17L1163.44 163.91L1158.34 160.66L1153.15 157.40L1147.89 154.14L1142.55 150.89L1137.14 147.63L1131.66 144.38L1126.11 141.12L1120.49 137.86L1114.80 134.61L1109.05 131.35L1103.24 128.10L1097.36 124.84L1091.42 121.58L1085.43 118.33L1079.38 115.07L1073.28 111.82L1067.13 108.56L1060.92 105.30L1054.67 102.05L1048.37 98.79L1042.02 95.54L1035.63 92.28L1029.21 89.02L1022.74 85.77L1016.24 82.51L1009.70 79.26L1003.13 76.00L996.52 72.74L989.89 69.49L983.24 66.23L976.55 62.98L969.85 59.72L963.12 56.46L956.38 53.21L949.62 49.95L942.84 46.70L936.05 43.44L929.26 40.18L922.45 36.93L915.64 33.67L908.82 30.42L902.00 27.16"/><path d="M902.00 613.24L907.97 609.98L913.93 606.73L919.89 603.47L925.85 600.22L931.80 596.96L937.74 593.70L943.66 590.45L949.58 587.19L955.48 583.94L961.37 580.68L967.23 577.42L973.08 574.17L978.91 570.91L984.71 567.66L990.49 564.40L996.23 561.14L1001.96 557.89L1007.65 554.63L1013.31 551.38L1018.93 548.12L1024.52 544.86L1030.07 541.61L1035.58 538.35L1041.06 535.10L1046.48 531.84L1051.87 528.58L1057.21 525.33L1062.50 522.07L1067.75 518.82L1072.94 515.56L1078.08 512.30L1083.17 509.05L1088.20 505.79L1093.18 502.54L1098.09 499.28L1102.95 496.02L1107.75 492.77L1112.48 489.51L1117.15 486.26L1121.76 483.00L1126.29 479.74L1130.76 476.49L1135.16 473.23L1139.49 469.98L1143.75 466.72L1147.93 463.46L1152.04 460.21L1156.07 456.95L1160.02 453.70L1163.90 450.44L1167.69 447.18L1171.41 443.93L1175.04 440.67L1178.59 437.42L1182.05 434.16L1185.43 430.90L1188.72 427.65L1191.93 424.39L1195.05 421.14L1198.08 417.88L1201.01 414.62L1203.86 411.37L1206.62 408.11L1209.28 404.86L1211.85 401.60L1214.32 398.34L1216.70 395.09L1218.99 391.83L1221.17 388.58L1223.26 385.32L1225.25 382.06L1227.15 378.81L1228.94 375.55L1230.64 372.30L1232.23 369.04L1233.72 365.78L1235.12 362.53L1236.41 359.27L1237.60 356.02L1238.69 352.76L1239.67 349.50L1240.55 346.25L1241.33 342.99L1242.01 339.74L1242.58 336.48L1243.05 333.22L1243.41 329.97L1243.67 326.71L1243.83 323.46L1243.88 320.20L1243.83 316.94L1243.67 313.69L1243.41 310.43L1243.05 307.18L1242.58 303.92L1242.01 300.66L1241.33 297.41L1240.55 294.15L1239.67 290.90L1238.69 287.64L1237.60 284.38L1236.41 281.13L1235.12 277.87L1233.72 274.62L1232.23 271.36L1230.64 268.10L1228.94 264.85L1227.15 261.59L1225.25 258.34L1223.26 255.08L1221.17 251.82L1218.99 248.57L1216.70 245.31L1214.32 242.06L1211.85 238.80L1209.28 235.54L1206.62 232.29L1203.86 229.03L1201.01 225.78L1198.08 222.52L1195.05 219.26L1191.93 216.01L1188.72 212.75L1185.43 209.50L1182.05 206.24L1178.59 202.98L1175.04 199.73L1171.41 196.47L1167.69 193.22L1163.90 189.96L1160.02 186.70L1156.07 183.45L1152.04 180.19L1147.93 176.94L1143.75 173.68L1139.49 170.42L1135.16 167.17L1130.76 163.91L1126.29 160.66L1121.76 157.40L1117.15 154.14L1112.48 150.89L1107.75 147.63L1102.95 144.38L1098.09 141.12L1093.18 137.86L1088.20 134.61L1083.17 131.35L1078.08 128.10L1072.94 124.84L1067.75 121.58L1062.50 118.33L1057.21 115.07L1051.87 111.82L1046.48 108.56L1041.06 105.30L1035.58 102.05L1030.07 98.79L1024.52 95.54L1018.93 92.28L1013.31 89.02L1007.65 85.77L1001.96 82.51L996.23 79.26L990.49 76.00L984.71 72.74L978.91 69.49L973.08 66.23L967.23 62.98L961.37 59.72L955.48 56.46L949.58 53.21L943.66 49.95L937.74 46.70L931.80 43.44L925.85 40.18L919.89 36.93L913.93 33.67L907.97 30.42L902.00 27.16"/><path d="M902.00 613.24L907.11 609.98L912.23 606.73L917.34 603.47L922.44 600.22L927.54 596.96L932.63 593.70L937.71 590.45L942.78 587.19L947.84 583.94L952.89 580.68L957.91 577.42L962.93 574.17L967.92 570.91L972.89 567.66L977.84 564.40L982.77 561.14L987.68 557.89L992.55 554.63L997.40 551.38L1002.23 548.12L1007.02 544.86L1011.77 541.61L1016.50 538.35L1021.19 535.10L1025.84 531.84L1030.46 528.58L1035.04 525.33L1039.57 522.07L1044.07 518.82L1048.52 515.56L1052.93 512.30L1057.29 509.05L1061.60 505.79L1065.87 502.54L1070.08 499.28L1074.24 496.02L1078.36 492.77L1082.41 489.51L1086.42 486.26L1090.36 483.00L1094.25 479.74L1098.08 476.49L1101.85 473.23L1105.56 469.98L1109.21 466.72L1112.80 463.46L1116.32 460.21L1119.77 456.95L1123.16 453.70L1126.48 450.44L1129.73 447.18L1132.92 443.93L1136.03 440.67L1139.07 437.42L1142.04 434.16L1144.94 430.90L1147.76 427.65L1150.51 424.39L1153.18 421.14L1155.78 417.88L1158.30 414.62L1160.74 411.37L1163.10 408.11L1165.38 404.86L1167.58 401.60L1169.71 398.34L1171.74 395.09L1173.70 391.83L1175.58 388.58L1177.37 385.32L1179.07 382.06L1180.70 378.81L1182.24 375.55L1183.69 372.30L1185.05 369.04L1186.34 365.78L1187.53 362.53L1188.64 359.27L1189.66 356.02L1190.59 352.76L1191.43 349.50L1192.19 346.25L1192.86 342.99L1193.43 339.74L1193.92 336.48L1194.33 333.22L1194.64 329.97L1194.86 326.71L1195.00 323.46L1195.04 320.20L1195.00 316.94L1194.86 313.69L1194.64 310.43L1194.33 307.18L1193.92 303.92L1193.43 300.66L1192.86 297.41L1192.19 294.15L1191.43 290.90L1190.59 287.64L1189.66 284.38L1188.64 281.13L1187.53 277.87L1186.34 274.62L1185.05 271.36L1183.69 268.10L1182.24 264.85L1180.70 261.59L1179.07 258.34L1177.37 255.08L1175.58 251.82L1173.70 248.57L1171.74 245.31L1169.71 242.06L1167.58 238.80L1165.38 235.54L1163.10 232.29L1160.74 229.03L1158.30 225.78L1155.78 222.52L1153.18 219.26L1150.51 216.01L1147.76 212.75L1144.94 209.50L1142.04 206.24L1139.07 202.98L1136.03 199.73L1132.92 196.47L1129.73 193.22L1126.48 189.96L1123.16 186.70L1119.77 183.45L1116.32 180.19L1112.80 176.94L1109.21 173.68L1105.56 170.42L1101.85 167.17L1098.08 163.91L1094.25 160.66L1090.36 157.40L1086.42 154.14L1082.41 150.89L1078.36 147.63L1074.24 144.38L1070.08 141.12L1065.87 137.86L1061.60 134.61L1057.29 131.35L1052.93 128.10L1048.52 124.84L1044.07 121.58L1039.57 118.33L1035.04 115.07L1030.46 111.82L1025.84 108.56L1021.19 105.30L1016.50 102.05L1011.77 98.79L1007.02 95.54L1002.23 92.28L997.40 89.02L992.55 85.77L987.68 82.51L982.77 79.26L977.84 76.00L972.89 72.74L967.92 69.49L962.93 66.23L957.91 62.98L952.89 59.72L947.84 56.46L942.78 53.21L937.71 49.95L932.63 46.70L927.54 43.44L922.44 40.18L917.34 36.93L912.23 33.67L907.11 30.42L902.00 27.16"/><path d="M902.00 613.24L906.26 609.98L910.52 606.73L914.78 603.47L919.03 600.22L923.28 596.96L927.53 593.70L931.76 590.45L935.99 587.19L940.20 583.94L944.40 580.68L948.60 577.42L952.77 574.17L956.93 570.91L961.08 567.66L965.20 564.40L969.31 561.14L973.40 557.89L977.46 554.63L981.50 551.38L985.52 548.12L989.51 544.86L993.48 541.61L997.42 538.35L1001.33 535.10L1005.20 531.84L1009.05 528.58L1012.86 525.33L1016.64 522.07L1020.39 518.82L1024.10 515.56L1027.77 512.30L1031.41 509.05L1035.00 505.79L1038.55 502.54L1042.07 499.28L1045.54 496.02L1048.96 492.77L1052.34 489.51L1055.68 486.26L1058.97 483.00L1062.21 479.74L1065.40 476.49L1068.54 473.23L1071.64 469.98L1074.68 466.72L1077.66 463.46L1080.60 460.21L1083.48 456.95L1086.30 453.70L1089.07 450.44L1091.78 447.18L1094.43 443.93L1097.03 440.67L1099.56 437.42L1102.04 434.16L1104.45 430.90L1106.80 427.65L1109.09 424.39L1111.32 421.14L1113.48 417.88L1115.58 414.62L1117.62 411.37L1119.58 408.11L1121.49 404.86L1123.32 401.60L1125.09 398.34L1126.79 395.09L1128.42 391.83L1129.98 388.58L1131.47 385.32L1132.90 382.06L1134.25 378.81L1135.53 375.55L1136.74 372.30L1137.88 369.04L1138.95 365.78L1139.94 362.53L1140.86 359.27L1141.71 356.02L1142.49 352.76L1143.19 349.50L1143.82 346.25L1144.38 342.99L1144.86 339.74L1145.27 336.48L1145.61 333.22L1145.87 329.97L1146.05 326.71L1146.16 323.46L1146.20 320.20L1146.16 316.94L1146.05 313.69L1145.87 310.43L1145.61 307.18L1145.27 303.92L1144.86 300.66L1144.38 297.41L1143.82 294.15L1143.19 290.90L1142.49 287.64L1141.71 284.38L1140.86 281.13L1139.94 277.87L1138.95 274.62L1137.88 271.36L1136.74 268.10L1135.53 264.85L1134.25 261.59L1132.90 258.34L1131.47 255.08L1129.98 251.82L1128.42 248.57L1126.79 245.31L1125.09 242.06L1123.32 238.80L1121.49 235.54L1119.58 232.29L1117.62 229.03L1115.58 225.78L1113.48 222.52L1111.32 219.26L1109.09 216.01L1106.80 212.75L1104.45 209.50L1102.04 206.24L1099.56 202.98L1097.03 199.73L1094.43 196.47L1091.78 193.22L1089.07 189.96L1086.30 186.70L1083.48 183.45L1080.60 180.19L1077.66 176.94L1074.68 173.68L1071.64 170.42L1068.54 167.17L1065.40 163.91L1062.21 160.66L1058.97 157.40L1055.68 154.14L1052.34 150.89L1048.96 147.63L1045.54 144.38L1042.07 141.12L1038.55 137.86L1035.00 134.61L1031.41 131.35L1027.77 128.10L1024.10 124.84L1020.39 121.58L1016.64 118.33L1012.86 115.07L1009.05 111.82L1005.20 108.56L1001.33 105.30L997.42 102.05L993.48 98.79L989.51 95.54L985.52 92.28L981.50 89.02L977.46 85.77L973.40 82.51L969.31 79.26L965.20 76.00L961.08 72.74L956.93 69.49L952.77 66.23L948.60 62.98L944.40 59.72L940.20 56.46L935.99 53.21L931.76 49.95L927.53 46.70L923.28 43.44L919.03 40.18L914.78 36.93L910.52 33.67L906.26 30.42L902.00 27.16"/><path d="M902.00 613.24L905.41 609.98L908.82 606.73L912.22 603.47L915.63 600.22L919.03 596.96L922.42 593.70L925.81 590.45L929.19 587.19L932.56 583.94L935.92 580.68L939.28 577.42L942.62 574.17L945.95 570.91L949.26 567.66L952.56 564.40L955.85 561.14L959.12 557.89L962.37 554.63L965.60 551.38L968.82 548.12L972.01 544.86L975.18 541.61L978.33 538.35L981.46 535.10L984.56 531.84L987.64 528.58L990.69 525.33L993.72 522.07L996.71 518.82L999.68 515.56L1002.62 512.30L1005.53 509.05L1008.40 505.79L1011.24 502.54L1014.05 499.28L1016.83 496.02L1019.57 492.77L1022.28 489.51L1024.94 486.26L1027.57 483.00L1030.17 479.74L1032.72 476.49L1035.24 473.23L1037.71 469.98L1040.14 466.72L1042.53 463.46L1044.88 460.21L1047.18 456.95L1049.44 453.70L1051.65 450.44L1053.82 447.18L1055.95 443.93L1058.02 440.67L1060.05 437.42L1062.03 434.16L1063.96 430.90L1065.84 427.65L1067.67 424.39L1069.46 421.14L1071.19 417.88L1072.87 414.62L1074.49 411.37L1076.07 408.11L1077.59 404.86L1079.06 401.60L1080.47 398.34L1081.83 395.09L1083.13 391.83L1084.38 388.58L1085.58 385.32L1086.72 382.06L1087.80 378.81L1088.82 375.55L1089.79 372.30L1090.70 369.04L1091.56 365.78L1092.35 362.53L1093.09 359.27L1093.77 356.02L1094.39 352.76L1094.95 349.50L1095.46 346.25L1095.90 342.99L1096.29 339.74L1096.62 336.48L1096.88 333.22L1097.09 329.97L1097.24 326.71L1097.33 323.46L1097.36 320.20L1097.33 316.94L1097.24 313.69L1097.09 310.43L1096.88 307.18L1096.62 303.92L1096.29 300.66L1095.90 297.41L1095.46 294.15L1094.95 290.90L1094.39 287.64L1093.77 284.38L1093.09 281.13L1092.35 277.87L1091.56 274.62L1090.70 271.36L1089.79 268.10L1088.82 264.85L1087.80 261.59L1086.72 258.34L1085.58 255.08L1084.38 251.82L1083.13 248.57L1081.83 245.31L1080.47 242.06L1079.06 238.80L1077.59 235.54L1076.07 232.29L1074.49 229.03L1072.87 225.78L1071.19 222.52L1069.46 219.26L1067.67 216.01L1065.84 212.75L1063.96 209.50L1062.03 206.24L1060.05 202.98L1058.02 199.73L1055.95 196.47L1053.82 193.22L1051.65 189.96L1049.44 186.70L1047.18 183.45L1044.88 180.19L1042.53 176.94L1040.14 173.68L1037.71 170.42L1035.24 167.17L1032.72 163.91L1030.17 160.66L1027.57 157.40L1024.94 154.14L1022.28 150.89L1019.57 147.63L1016.83 144.38L1014.05 141.12L1011.24 137.86L1008.40 134.61L1005.53 131.35L1002.62 128.10L999.68 124.84L996.71 121.58L993.72 118.33L990.69 115.07L987.64 111.82L984.56 108.56L981.46 105.30L978.33 102.05L975.18 98.79L972.01 95.54L968.82 92.28L965.60 89.02L962.37 85.77L959.12 82.51L955.85 79.26L952.56 76.00L949.26 72.74L945.95 69.49L942.62 66.23L939.28 62.98L935.92 59.72L932.56 56.46L929.19 53.21L925.81 49.95L922.42 46.70L919.03 43.44L915.63 40.18L912.22 36.93L908.82 33.67L905.41 30.42L902.00 27.16"/><path d="M902.00 613.24L904.56 609.98L907.11 606.73L909.67 603.47L912.22 600.22L914.77 596.96L917.32 593.70L919.86 590.45L922.39 587.19L924.92 583.94L927.44 580.68L929.96 577.42L932.46 574.17L934.96 570.91L937.45 567.66L939.92 564.40L942.39 561.14L944.84 557.89L947.28 554.63L949.70 551.38L952.11 548.12L954.51 544.86L956.89 541.61L959.25 538.35L961.60 535.10L963.92 531.84L966.23 528.58L968.52 525.33L970.79 522.07L973.03 518.82L975.26 515.56L977.46 512.30L979.64 509.05L981.80 505.79L983.93 502.54L986.04 499.28L988.12 496.02L990.18 492.77L992.21 489.51L994.21 486.26L996.18 483.00L998.13 479.74L1000.04 476.49L1001.93 473.23L1003.78 469.98L1005.61 466.72L1007.40 463.46L1009.16 460.21L1010.89 456.95L1012.58 453.70L1014.24 450.44L1015.87 447.18L1017.46 443.93L1019.02 440.67L1020.54 437.42L1022.02 434.16L1023.47 430.90L1024.88 427.65L1026.26 424.39L1027.59 421.14L1028.89 417.88L1030.15 414.62L1031.37 411.37L1032.55 408.11L1033.69 404.86L1034.79 401.60L1035.85 398.34L1036.87 395.09L1037.85 391.83L1038.79 388.58L1039.68 385.32L1040.54 382.06L1041.35 378.81L1042.12 375.55L1042.84 372.30L1043.53 369.04L1044.17 365.78L1044.76 362.53L1045.32 359.27L1045.83 356.02L1046.29 352.76L1046.72 349.50L1047.09 346.25L1047.43 342.99L1047.72 339.74L1047.96 336.48L1048.16 333.22L1048.32 329.97L1048.43 326.71L1048.50 323.46L1048.52 320.20L1048.50 316.94L1048.43 313.69L1048.32 310.43L1048.16 307.18L1047.96 303.92L1047.72 300.66L1047.43 297.41L1047.09 294.15L1046.72 290.90L1046.29 287.64L1045.83 284.38L1045.32 281.13L1044.76 277.87L1044.17 274.62L1043.53 271.36L1042.84 268.10L1042.12 264.85L1041.35 261.59L1040.54 258.34L1039.68 255.08L1038.79 251.82L1037.85 248.57L1036.87 245.31L1035.85 242.06L1034.79 238.80L1033.69 235.54L1032.55 232.29L1031.37 229.03L1030.15 225.78L1028.89 222.52L1027.59 219.26L1026.26 216.01L1024.88 212.75L1023.47 209.50L1022.02 206.24L1020.54 202.98L1019.02 199.73L1017.46 196.47L1015.87 193.22L1014.24 189.96L1012.58 186.70L1010.89 183.45L1009.16 180.19L1007.40 176.94L1005.61 173.68L1003.78 170.42L1001.93 167.17L1000.04 163.91L998.13 160.66L996.18 157.40L994.21 154.14L992.21 150.89L990.18 147.63L988.12 144.38L986.04 141.12L983.93 137.86L981.80 134.61L979.64 131.35L977.46 128.10L975.26 124.84L973.03 121.58L970.79 118.33L968.52 115.07L966.23 111.82L963.92 108.56L961.60 105.30L959.25 102.05L956.89 98.79L954.51 95.54L952.11 92.28L949.70 89.02L947.28 85.77L944.84 82.51L942.39 79.26L939.92 76.00L937.45 72.74L934.96 69.49L932.46 66.23L929.96 62.98L927.44 59.72L924.92 56.46L922.39 53.21L919.86 49.95L917.32 46.70L914.77 43.44L912.22 40.18L909.67 36.93L907.11 33.67L904.56 30.42L902.00 27.16"/><path d="M902.00 613.24L903.70 609.98L905.41 606.73L907.11 603.47L908.81 600.22L910.51 596.96L912.21 593.70L913.90 590.45L915.59 587.19L917.28 583.94L918.96 580.68L920.64 577.42L922.31 574.17L923.97 570.91L925.63 567.66L927.28 564.40L928.92 561.14L930.56 557.89L932.18 554.63L933.80 551.38L935.41 548.12L937.01 544.86L938.59 541.61L940.17 538.35L941.73 535.10L943.28 531.84L944.82 528.58L946.35 525.33L947.86 522.07L949.36 518.82L950.84 515.56L952.31 512.30L953.76 509.05L955.20 505.79L956.62 502.54L958.03 499.28L959.41 496.02L960.79 492.77L962.14 489.51L963.47 486.26L964.79 483.00L966.08 479.74L967.36 476.49L968.62 473.23L969.85 469.98L971.07 466.72L972.27 463.46L973.44 460.21L974.59 456.95L975.72 453.70L976.83 450.44L977.91 447.18L978.97 443.93L980.01 440.67L981.02 437.42L982.01 434.16L982.98 430.90L983.92 427.65L984.84 424.39L985.73 421.14L986.59 417.88L987.43 414.62L988.25 411.37L989.03 408.11L989.79 404.86L990.53 401.60L991.24 398.34L991.91 395.09L992.57 391.83L993.19 388.58L993.79 385.32L994.36 382.06L994.90 378.81L995.41 375.55L995.90 372.30L996.35 369.04L996.78 365.78L997.18 362.53L997.55 359.27L997.89 356.02L998.20 352.76L998.48 349.50L998.73 346.25L998.95 342.99L999.14 339.74L999.31 336.48L999.44 333.22L999.55 329.97L999.62 326.71L999.67 323.46L999.68 320.20L999.67 316.94L999.62 313.69L999.55 310.43L999.44 307.18L999.31 303.92L999.14 300.66L998.95 297.41L998.73 294.15L998.48 290.90L998.20 287.64L997.89 284.38L997.55 281.13L997.18 277.87L996.78 274.62L996.35 271.36L995.90 268.10L995.41 264.85L994.90 261.59L994.36 258.34L993.79 255.08L993.19 251.82L992.57 248.57L991.91 245.31L991.24 242.06L990.53 238.80L989.79 235.54L989.03 232.29L988.25 229.03L987.43 225.78L986.59 222.52L985.73 219.26L984.84 216.01L983.92 212.75L982.98 209.50L982.01 206.24L981.02 202.98L980.01 199.73L978.97 196.47L977.91 193.22L976.83 189.96L975.72 186.70L974.59 183.45L973.44 180.19L972.27 176.94L971.07 173.68L969.85 170.42L968.62 167.17L967.36 163.91L966.08 160.66L964.79 157.40L963.47 154.14L962.14 150.89L960.79 147.63L959.41 144.38L958.03 141.12L956.62 137.86L955.20 134.61L953.76 131.35L952.31 128.10L950.84 124.84L949.36 121.58L947.86 118.33L946.35 115.07L944.82 111.82L943.28 108.56L941.73 105.30L940.17 102.05L938.59 98.79L937.01 95.54L935.41 92.28L933.80 89.02L932.18 85.77L930.56 82.51L928.92 79.26L927.28 76.00L925.63 72.74L923.97 69.49L922.31 66.23L920.64 62.98L918.96 59.72L917.28 56.46L915.59 53.21L913.90 49.95L912.21 46.70L910.51 43.44L908.81 40.18L907.11 36.93L905.41 33.67L903.70 30.42L902.00 27.16"/><path d="M902.00 613.24L902.85 609.98L903.70 606.73L904.56 603.47L905.41 600.22L906.26 596.96L907.11 593.70L907.95 590.45L908.80 587.19L909.64 583.94L910.48 580.68L911.32 577.42L912.15 574.17L912.99 570.91L913.82 567.66L914.64 564.40L915.46 561.14L916.28 557.89L917.09 554.63L917.90 551.38L918.70 548.12L919.50 544.86L920.30 541.61L921.08 538.35L921.87 535.10L922.64 531.84L923.41 528.58L924.17 525.33L924.93 522.07L925.68 518.82L926.42 515.56L927.15 512.30L927.88 509.05L928.60 505.79L929.31 502.54L930.01 499.28L930.71 496.02L931.39 492.77L932.07 489.51L932.74 486.26L933.39 483.00L934.04 479.74L934.68 476.49L935.31 473.23L935.93 469.98L936.54 466.72L937.13 463.46L937.72 460.21L938.30 456.95L938.86 453.70L939.41 450.44L939.96 447.18L940.49 443.93L941.01 440.67L941.51 437.42L942.01 434.16L942.49 430.90L942.96 427.65L943.42 424.39L943.86 421.14L944.30 417.88L944.72 414.62L945.12 411.37L945.52 408.11L945.90 404.86L946.26 401.60L946.62 398.34L946.96 395.09L947.28 391.83L947.60 388.58L947.89 385.32L948.18 382.06L948.45 378.81L948.71 375.55L948.95 372.30L949.18 369.04L949.39 365.78L949.59 362.53L949.77 359.27L949.94 356.02L950.10 352.76L950.24 349.50L950.36 346.25L950.48 342.99L950.57 339.74L950.65 336.48L950.72 333.22L950.77 329.97L950.81 326.71L950.83 323.46L950.84 320.20L950.83 316.94L950.81 313.69L950.77 310.43L950.72 307.18L950.65 303.92L950.57 300.66L950.48 297.41L950.36 294.15L950.24 290.90L950.10 287.64L949.94 284.38L949.77 281.13L949.59 277.87L949.39 274.62L949.18 271.36L948.95 268.10L948.71 264.85L948.45 261.59L948.18 258.34L947.89 255.08L947.60 251.82L947.28 248.57L946.96 245.31L946.62 242.06L946.26 238.80L945.90 235.54L945.52 232.29L945.12 229.03L944.72 225.78L944.30 222.52L943.86 219.26L943.42 216.01L942.96 212.75L942.49 209.50L942.01 206.24L941.51 202.98L941.01 199.73L940.49 196.47L939.96 193.22L939.41 189.96L938.86 186.70L938.30 183.45L937.72 180.19L937.13 176.94L936.54 173.68L935.93 170.42L935.31 167.17L934.68 163.91L934.04 160.66L933.39 157.40L932.74 154.14L932.07 150.89L931.39 147.63L930.71 144.38L930.01 141.12L929.31 137.86L928.60 134.61L927.88 131.35L927.15 128.10L926.42 124.84L925.68 121.58L924.93 118.33L924.17 115.07L923.41 111.82L922.64 108.56L921.87 105.30L921.08 102.05L920.30 98.79L919.50 95.54L918.70 92.28L917.90 89.02L917.09 85.77L916.28 82.51L915.46 79.26L914.64 76.00L913.82 72.74L912.99 69.49L912.15 66.23L911.32 62.98L910.48 59.72L909.64 56.46L908.80 53.21L907.95 49.95L907.11 46.70L906.26 43.44L905.41 40.18L904.56 36.93L903.70 33.67L902.85 30.42L902.00 27.16"/><path d="M902.00 613.24L912.23 609.98L922.45 606.73L932.67 603.47L942.88 600.22L953.08 596.96L963.26 593.70L973.43 590.45L983.57 587.19L993.68 583.94L1003.77 580.68L1013.83 577.42L1023.85 574.17L1033.84 570.91L1043.79 567.66L1053.69 564.40L1063.55 561.14L1073.35 557.89L1083.11 554.63L1092.81 551.38L1102.45 548.12L1112.03 544.86L1121.55 541.61L1131.00 538.35L1140.38 535.10L1149.69 531.84L1158.92 528.58L1168.07 525.33L1177.15 522.07L1186.14 518.82L1195.04 515.56L1203.85 512.30L1212.58 509.05L1221.20 505.79L1229.73 502.54L1238.16 499.28L1246.49 496.02L1254.71 492.77L1262.83 489.51L1270.83 486.26L1278.72 483.00L1286.50 479.74L1294.16 476.49L1301.71 473.23L1309.13 469.98L1316.42 466.72L1323.59 463.46L1330.63 460.21L1337.54 456.95L1344.32 453.70L1350.96 450.44L1357.47 447.18L1363.84 443.93L1370.06 440.67L1376.15 437.42L1382.09 434.16L1387.88 430.90L1393.53 427.65L1399.02 424.39L1404.37 421.14L1409.56 417.88L1414.60 414.62L1419.48 411.37L1424.20 408.11L1428.77 404.86L1433.17 401.60L1437.41 398.34L1441.49 395.09L1445.40 391.83L1449.15 388.58L1452.74 385.32L1456.15 382.06L1459.40 378.81L1462.47 375.55L1465.38 372.30L1468.11 369.04L1470.67 365.78L1473.06 362.53L1475.27 359.27L1477.31 356.02L1479.18 352.76L1480.86 349.50L1482.38 346.25L1483.71 342.99L1484.87 339.74L1485.85 336.48L1486.65 333.22L1487.28 329.97L1487.72 326.71L1487.99 323.46L1488.08 320.20L1487.99 316.94L1487.72 313.69L1487.28 310.43L1486.65 307.18L1485.85 303.92L1484.87 300.66L1483.71 297.41L1482.38 294.15L1480.86 290.90L1479.18 287.64L1477.31 284.38L1475.27 281.13L1473.06 277.87L1470.67 274.62L1468.11 271.36L1465.38 268.10L1462.47 264.85L1459.40 261.59L1456.15 258.34L1452.74 255.08L1449.15 251.82L1445.40 248.57L1441.49 245.31L1437.41 242.06L1433.17 238.80L1428.77 235.54L1424.20 232.29L1419.48 229.03L1414.60 225.78L1409.56 222.52L1404.37 219.26L1399.02 216.01L1393.53 212.75L1387.88 209.50L1382.09 206.24L1376.15 202.98L1370.06 199.73L1363.84 196.47L1357.47 193.22L1350.96 189.96L1344.32 186.70L1337.54 183.45L1330.63 180.19L1323.59 176.94L1316.42 173.68L1309.13 170.42L1301.71 167.17L1294.16 163.91L1286.50 160.66L1278.72 157.40L1270.83 154.14L1262.83 150.89L1254.71 147.63L1246.49 144.38L1238.16 141.12L1229.73 137.86L1221.20 134.61L1212.58 131.35L1203.85 128.10L1195.04 124.84L1186.14 121.58L1177.15 118.33L1168.07 115.07L1158.92 111.82L1149.69 108.56L1140.38 105.30L1131.00 102.05L1121.55 98.79L1112.03 95.54L1102.45 92.28L1092.81 89.02L1083.11 85.77L1073.35 82.51L1063.55 79.26L1053.69 76.00L1043.79 72.74L1033.84 69.49L1023.85 66.23L1013.83 62.98L1003.77 59.72L993.68 56.46L983.57 53.21L973.43 49.95L963.26 46.70L953.08 43.44L942.88 40.18L932.67 36.93L922.45 33.67L912.23 30.42L902.00 27.16"/><path d="M902.00 564.40L750.31 564.40"/><path d="M902.00 564.40L1053.69 564.40"/><path d="M902.00 515.56L608.96 515.56"/><path d="M902.00 515.56L1195.04 515.56"/><path d="M902.00 466.72L487.58 466.72"/><path d="M902.00 466.72L1316.42 466.72"/><path d="M902.00 417.88L394.44 417.88"/><path d="M902.00 417.88L1409.56 417.88"/><path d="M902.00 369.04L335.89 369.04"/><path d="M902.00 369.04L1468.11 369.04"/><path d="M902.00 320.20L315.92 320.20"/><path d="M902.00 320.20L1488.08 320.20"/><path d="M902.00 271.36L335.89 271.36"/><path d="M902.00 271.36L1468.11 271.36"/><path d="M902.00 222.52L394.44 222.52"/><path d="M902.00 222.52L1409.56 222.52"/><path d="M902.00 173.68L487.58 173.68"/><path d="M902.00 173.68L1316.42 173.68"/><path d="M902.00 124.84L608.96 124.84"/><path d="M902.00 124.84L1195.04 124.84"/><path d="M902.00 76.00L750.31 76.00"/><path d="M902.00 76.00L1053.69 76.00"/></g>
<g font-family="Liberation Sans" font-size="10.30" fill="#ffffff" fill-opacity="0.5"><text x="889.24" y="623.06" textLength="20.51" lengthAdjust="spacingAndGlyphs">−90</text><circle cx="914.16" cy="616.06" r="0.75" fill="none" stroke="#fff" stroke-opacity="0.45" stroke-width="0.6"/><text x="889.24" y="525.38" textLength="20.51" lengthAdjust="spacingAndGlyphs">−60</text><circle cx="914.16" cy="518.38" r="0.75" fill="none" stroke="#fff" stroke-opacity="0.45" stroke-width="0.6"/><text x="889.24" y="427.70" textLength="20.51" lengthAdjust="spacingAndGlyphs">−30</text><circle cx="914.16" cy="420.70" r="0.75" fill="none" stroke="#fff" stroke-opacity="0.45" stroke-width="0.6"/><text x="889.24" y="220.23" textLength="20.51" lengthAdjust="spacingAndGlyphs">+30</text><circle cx="914.16" cy="213.23" r="0.75" fill="none" stroke="#fff" stroke-opacity="0.45" stroke-width="0.6"/><text x="889.24" y="122.55" textLength="20.51" lengthAdjust="spacingAndGlyphs">+60</text><circle cx="914.16" cy="115.55" r="0.75" fill="none" stroke="#fff" stroke-opacity="0.45" stroke-width="0.6"/><text x="889.24" y="24.87" textLength="20.51" lengthAdjust="spacingAndGlyphs">+90</text><circle cx="914.16" cy="17.87" r="0.75" fill="none" stroke="#fff" stroke-opacity="0.45" stroke-width="0.6"/><text x="892.34" y="330.02" textLength="14.33" lengthAdjust="spacingAndGlyphs">+0</text><circle cx="911.06" cy="323.02" r="0.75" fill="none" stroke="#fff" stroke-opacity="0.45" stroke-width="0.6"/><text x="791.56" y="330.02" textLength="20.51" lengthAdjust="spacingAndGlyphs">+30</text><circle cx="816.48" cy="323.02" r="0.75" fill="none" stroke="#fff" stroke-opacity="0.45" stroke-width="0.6"/><text x="693.88" y="330.02" textLength="20.51" lengthAdjust="spacingAndGlyphs">+60</text><circle cx="718.80" cy="323.02" r="0.75" fill="none" stroke="#fff" stroke-opacity="0.45" stroke-width="0.6"/><text x="596.20" y="330.02" textLength="20.51" lengthAdjust="spacingAndGlyphs">+90</text><circle cx="621.12" cy="323.02" r="0.75" fill="none" stroke="#fff" stroke-opacity="0.45" stroke-width="0.6"/><text x="495.43" y="330.02" textLength="26.70" lengthAdjust="spacingAndGlyphs">+120</text><circle cx="526.53" cy="323.02" r="0.75" fill="none" stroke="#fff" stroke-opacity="0.45" stroke-width="0.6"/><text x="397.75" y="330.02" textLength="26.70" lengthAdjust="spacingAndGlyphs">+150</text><circle cx="428.85" cy="323.02" r="0.75" fill="none" stroke="#fff" stroke-opacity="0.45" stroke-width="0.6"/><text x="300.07" y="330.02" textLength="26.70" lengthAdjust="spacingAndGlyphs">+180</text><circle cx="331.17" cy="323.02" r="0.75" fill="none" stroke="#fff" stroke-opacity="0.45" stroke-width="0.6"/><text x="1374.55" y="330.02" textLength="26.70" lengthAdjust="spacingAndGlyphs">+210</text><circle cx="1405.65" cy="323.02" r="0.75" fill="none" stroke="#fff" stroke-opacity="0.45" stroke-width="0.6"/><text x="1276.87" y="330.02" textLength="26.70" lengthAdjust="spacingAndGlyphs">+240</text><circle cx="1307.97" cy="323.02" r="0.75" fill="none" stroke="#fff" stroke-opacity="0.45" stroke-width="0.6"/><text x="1179.19" y="330.02" textLength="26.70" lengthAdjust="spacingAndGlyphs">+270</text><circle cx="1210.29" cy="323.02" r="0.75" fill="none" stroke="#fff" stroke-opacity="0.45" stroke-width="0.6"/><text x="1081.51" y="330.02" textLength="26.70" lengthAdjust="spacingAndGlyphs">+300</text><circle cx="1112.61" cy="323.02" r="0.75" fill="none" stroke="#fff" stroke-opacity="0.45" stroke-width="0.6"/><text x="983.83" y="330.02" textLength="26.70" lengthAdjust="spacingAndGlyphs">+330</text><circle cx="1014.93" cy="323.02" r="0.75" fill="none" stroke="#fff" stroke-opacity="0.45" stroke-width="0.6"/><text x="1472.23" y="330.02" textLength="26.70" lengthAdjust="spacingAndGlyphs">+180</text><circle cx="1503.33" cy="323.02" r="0.75" fill="none" stroke="#fff" stroke-opacity="0.45" stroke-width="0.6"/></g>
<path d="M647.80 110.80L648.76 110.54L650.04 110.18L651.58 109.76L653.27 109.29L655.05 108.80L656.82 108.33L658.50 107.88L660.00 107.50L661.36 107.17L662.65 106.88L663.91 106.60L665.14 106.34L666.35 106.08L667.55 105.83L668.77 105.57L670.00 105.30L671.25 105.02L672.50 104.73L673.75 104.45L675.00 104.16L676.25 103.87L677.50 103.58L678.75 103.29L680.00 103.00L681.25 102.71L682.50 102.42L683.75 102.12L685.00 101.83L686.25 101.53L687.50 101.23L688.75 100.92L690.00 100.60L691.25 100.27L692.50 99.93L693.75 99.58L695.00 99.23L696.25 98.87L697.50 98.52L698.75 98.16L700.00 97.80L701.25 97.45L702.50 97.09L703.75 96.74L705.00 96.39L706.25 96.03L707.50 95.66L708.75 95.29L710.00 94.90L711.25 94.50L712.50 94.09L713.75 93.67L715.00 93.24L716.25 92.81L717.50 92.38L718.75 91.94L720.00 91.50L721.25 91.06L722.50 90.61L723.75 90.16L725.00 89.71L726.25 89.26L727.50 88.80L728.75 88.35L730.00 87.90L731.25 87.45L732.50 87.00L733.75 86.55L735.00 86.11L736.25 85.66L737.50 85.21L738.75 84.75L740.00 84.30L741.23 83.86L742.42 83.43L743.60 83.01L744.79 82.58L746.01 82.14L747.27 81.67L748.59 81.16L750.00 80.60L751.52 79.98L753.13 79.31L754.82 78.60L756.54 77.86L758.28 77.11L760.01 76.36L761.69 75.62L763.30 74.90L764.84 74.20L766.35 73.50L767.83 72.81L769.29 72.11L770.73 71.42L772.15 70.74L773.58 70.07L775.00 69.40L776.49 68.71L778.08 67.98L779.69 67.23L781.28 66.51L782.78 65.82L784.12 65.21L785.25 64.69L786.10 64.30" stroke="#7ad151" stroke-width="2.083" fill="none" stroke-linejoin="round" stroke-linecap="butt"/>
<path d="M1017.2 63.8L1009.7 64.0L1009.70 64.00L1010.08 64.32L1010.54 64.75L1011.09 65.25L1011.73 65.81L1012.44 66.42L1013.22 67.05L1014.08 67.68L1015.00 68.30L1016.03 68.93L1017.17 69.59L1018.41 70.28L1019.71 70.98L1021.04 71.69L1022.39 72.38L1023.72 73.06L1025.00 73.70L1026.25 74.31L1027.50 74.91L1028.75 75.49L1030.00 76.06L1031.25 76.62L1032.50 77.18L1033.75 77.74L1035.00 78.30L1036.16 78.83L1037.19 79.32L1038.17 79.78L1039.17 80.26L1040.28 80.77L1041.56 81.34L1043.11 82.01L1045.00 82.80L1047.28 83.74L1049.89 84.82L1052.76 86.00L1055.81 87.24L1058.97 88.51L1062.16 89.77L1065.29 90.98L1068.30 92.10L1071.26 93.17L1074.26 94.22L1077.29 95.25L1080.31 96.26L1083.29 97.24L1086.21 98.17L1089.02 99.06L1091.70 99.90L1094.29 100.69L1096.83 101.43L1099.30 102.14L1101.69 102.80L1103.97 103.42L1106.13 103.99L1108.14 104.52L1110.00 105.00L1111.65 105.42L1113.08 105.76L1114.36 106.05L1115.52 106.29L1116.61 106.52L1117.69 106.73L1118.81 106.95L1120.00 107.20L1121.25 107.46L1122.50 107.72L1123.75 107.97L1125.00 108.22L1126.25 108.47L1127.50 108.72L1128.75 108.96L1130.00 109.20L1131.25 109.44L1132.50 109.68L1133.75 109.92L1135.00 110.15L1136.25 110.38L1137.50 110.60L1138.75 110.81L1140.00 111.00L1141.27 111.20L1142.56 111.40L1143.86 111.61L1145.16 111.80L1146.43 111.97L1147.68 112.10L1148.87 112.18L1150.00 112.20L1151.11 112.14L1152.23 112.00L1153.33 111.80L1154.38 111.58L1155.35 111.34L1156.21 111.11L1156.94 110.93L1157.50 110.80" stroke="#7ad151" stroke-width="2.083" fill="none" stroke-linejoin="round" stroke-linecap="butt"/>
<path d="M975.47 368.90L975.69 368.13L975.91 367.35L976.12 366.57L976.34 365.80L976.55 365.02L976.77 364.24L976.98 363.47L977.19 362.69L977.39 361.91L977.60 361.13L977.81 360.36L978.01 359.58L978.21 358.80L978.42 358.03L978.62 357.25L978.82 356.47L979.01 355.69L979.21 354.92L979.41 354.14L979.60 353.36L979.79 352.58L979.98 351.81L980.17 351.03L980.36 350.25L980.55 349.48L980.73 348.70L980.92 347.92L981.10 347.14L981.28 346.37L981.46 345.59L981.64 344.81L981.82 344.03L982.00 343.26L982.17 342.48L982.34 341.70L982.51 340.92L982.69 340.15L982.85 339.37L983.02 338.59L983.19 337.81L983.35 337.04L983.52 336.26L983.68 335.48L983.84 334.70L984.00 333.93L984.16 333.15L984.31 332.37L984.47 331.59L984.62 330.82L984.77 330.04L984.92 329.26L985.07 328.48L985.22 327.70L985.37 326.93L985.51 326.15L985.65 325.37L985.80 324.59L985.94 323.82L986.08 323.04L986.21 322.26L986.35 321.48L986.48 320.71L986.62 319.93L986.75 319.15L986.88 318.37L987.01 317.60L987.14 316.82L987.26 316.04L987.39 315.26L987.51 314.48L987.63 313.71L987.75 312.93L987.87 312.15L987.98 311.37L988.10 310.60L988.21 309.82L988.33 309.04L988.44 308.26L988.55 307.49L988.65 306.71L988.76 305.93L988.86 305.15L988.97 304.38L989.07 303.60L989.17 302.82L989.27 302.04L989.37 301.27L989.46 300.49L989.56 299.71L989.65 298.93L989.74 298.16L989.83 297.38L989.92 296.60L990.00 295.82L990.09 295.05L990.17 294.27L990.26 293.49L990.34 292.71L990.41 291.94L990.49 291.16L990.57 290.38L990.64 289.60L990.72 288.83L990.79 288.05L990.86 287.27L990.92 286.49L990.99 285.72L991.06 284.94L991.12 284.16L991.18 283.39L991.24 282.61L991.30 281.83L991.36 281.05L991.41 280.28L991.47 279.50L991.52 278.72L991.57 277.95L991.62 277.17L991.67 276.39L991.72 275.61L991.76 274.84L991.81 274.06L991.85 273.28L991.89 272.51L991.93 271.73L991.96 270.95L992.00 270.18L992.03 269.40L992.07 268.62L992.10 267.85L992.13 267.07L992.15 266.29L992.18 265.52L992.21 264.74L992.23 263.96L992.25 263.19L992.27 262.41L992.29 261.63L992.31 260.86L992.32 260.08L992.33 259.30L992.35 258.53L992.36 257.75L992.37 256.98L992.37 256.20L992.38 255.42L992.38 254.65L992.39 253.87L992.39 253.09L992.39 252.32L992.39 251.54L992.38 250.77L992.38 249.99L992.37 249.21L992.36 248.44L992.36 247.66L992.34 246.89L992.33 246.11L992.32 245.34L992.30 244.56L992.28 243.79L992.27 243.01L992.25 242.23L992.22 241.46L992.20 240.68L992.17 239.91L992.15 239.13L992.12 238.36L992.09 237.58L992.06 236.81L992.03 236.03L991.99 235.26L991.96 234.48L991.92 233.71L991.88 232.93L991.84 232.16L991.80 231.38L991.75 230.61L991.71 229.83L991.66 229.06L991.61 228.29L991.56 227.51L991.51 226.74L991.46 225.96L991.41 225.19L991.35 224.41L991.29 223.64L991.24 222.87L991.18 222.09L991.11 221.32L991.05 220.55L990.99 219.77L990.92 219.00L990.85 218.22L990.78 217.45L990.71 216.68L990.64 215.90L990.56 215.13L990.49 214.36L990.41 213.59L990.33 212.81L990.25 212.04L990.17 211.27L990.09 210.49L990.01 209.72L989.92 208.95L989.83 208.18L989.74 207.40L989.65 206.63L989.56 205.86L989.47 205.09L989.38 204.32L989.28 203.55L989.18 202.77L989.08 202.00L988.98 201.23L988.88 200.46L988.78 199.69L988.67 198.92L988.57 198.15L988.46 197.37L988.35 196.60L988.24 195.83L988.13 195.06L988.01 194.29L987.90 193.52L987.78 192.75L987.67 191.98L987.55 191.21L987.43 190.44L987.30 189.67L987.18 188.90L987.06 188.13L986.93 187.36L986.80 186.60L986.68 185.83L986.55 185.06L986.41 184.29L986.28 183.52L986.15 182.75L986.01 181.98L985.87 181.22L985.74 180.45L985.60 179.68L985.45 178.91L985.31 178.15L985.17 177.38L985.02 176.61L984.88 175.84L984.73 175.08L984.58 174.31L984.43 173.55L984.28 172.78L984.13 172.01L983.97 171.25L983.82 170.48L983.66 169.72L983.50 168.95L983.34 168.19L983.18 167.42L983.02 166.66L982.86 165.89L982.69 165.13L982.53 164.37L982.36 163.60L982.19 162.84L982.02 162.08L981.85 161.31L981.68 160.55L981.51 159.79L981.33 159.03L981.16 158.26L980.98 157.50L980.80 156.74L980.63 155.98L980.45 155.22L980.26 154.46L980.08 153.70L979.90 152.94L979.71 152.18L979.53 151.42L979.34 150.66L979.15 149.90L978.96 149.15L978.77 148.39L978.58 147.63L978.39 146.87L978.20 146.12L978.00 145.36L977.81 144.60L977.61 143.85L977.41 143.09L977.21 142.34L977.02 141.58L976.81 140.83L976.61 140.07L976.41 139.32L976.21 138.57L976.00 137.82L975.80 137.06L975.59 136.31L975.38 135.56L975.18 134.81L974.97 134.06L974.76 133.31L974.55 132.56L974.33 131.81L974.12 131.07L973.91 130.32L973.70 129.57L973.48 128.82L973.26 128.08L973.05 127.33L972.83 126.59L972.61 125.84L972.39 125.10L972.18 124.36L971.96 123.62L971.74 122.88L971.51 122.13L971.29 121.39L971.07 120.66L970.85 119.92L970.62 119.18L970.40 118.44L970.17 117.71L969.95 116.97L969.72 116.24L969.50 115.50L969.27 114.77L969.04 114.04L968.82 113.31L968.59 112.58L968.36 111.85L968.13 111.12L967.91 110.39L967.68 109.67L967.45 108.94L967.22 108.22L966.99 107.50L966.76 106.78L966.53 106.06L966.30 105.34L966.07 104.62L965.85 103.90L965.62 103.19L965.39 102.48L965.16 101.76L964.93 101.05L964.70 100.34L964.48 99.64L964.25 98.93L964.02 98.23L963.80 97.52L963.57 96.82L963.35 96.12L963.12 95.43L962.90 94.73L962.68 94.04L962.46 93.35L962.23 92.66L962.02 91.97L961.80 91.29L961.58 90.61L961.36 89.93L961.15 89.25L960.94 88.58L960.73 87.90L960.52 87.23L960.31 86.57L960.11 85.90L959.90 85.24L959.70 84.59L959.51 83.93L959.31 83.28L959.12 82.63L958.93 81.99L958.74 81.35L958.56 80.71L958.38 80.08L958.20 79.45L958.03 78.83L957.86 78.21L957.70 77.60L957.54 76.99L957.38 76.38L957.23 75.78L957.09 75.19L956.95 74.60L956.82 74.02L956.69 73.44L956.57 72.87L956.46 72.30L956.35 71.75L956.26 71.20L956.17 70.65L956.09 70.12L956.02 69.59L955.95 69.07L955.90 68.56L955.86 68.05L955.83 67.56L955.81 67.07L955.81 66.60L955.82 66.13L955.84 65.68L955.87 65.23L955.93 64.80L955.99 64.38L956.08 63.97L956.18 63.57L956.30 63.19L956.44 62.82L956.60 62.46L956.78 62.12L956.98 61.79L957.21 61.47L957.46 61.17L957.74 60.89L958.04 60.62L958.37 60.37L958.72 60.13L959.11 59.92L959.53 59.72L959.97 59.54L960.45 59.37L960.96 59.23L961.51 59.10L962.09 58.99L962.71 58.90L963.36 58.83L964.05 58.78L964.78 58.75L965.54 58.74L966.35 58.75L967.19 58.77L968.08 58.82L969.00 58.89L969.96 58.97L970.97 59.08L972.01 59.20L973.10 59.34L974.23 59.50L975.39 59.68L976.60 59.88L977.84 60.09L979.13 60.33L980.45 60.57L981.81 60.84L983.21 61.12L984.64 61.42L986.12 61.73L987.62 62.05L989.17 62.40L990.74 62.75L992.35 63.12L993.99 63.50L995.67 63.90L997.37 64.30L999.10 64.72L1000.87 65.15L1002.66 65.60L1004.48 66.05L1006.32 66.51L1008.19 66.99L1010.09 67.47L1012.01 67.96L1013.95 68.46L1015.92 68.97L1017.91 69.49L1019.91 70.02L1021.94 70.55L1023.99 71.10L1026.06 71.65L1028.14 72.20L1030.24 72.77L1032.36 73.34L1034.49 73.91L1036.64 74.49L1038.81 75.08L1040.99 75.67L1043.18 76.27L1045.39 76.88L1047.60 77.49L1049.83 78.10L1052.08 78.72L1054.33 79.34L1056.59 79.97L1058.87 80.60L1061.15 81.23L1063.44 81.87L1065.74 82.52L1068.05 83.16L1070.37 83.81L1072.70 84.47L1075.03 85.12L1077.37 85.78L1079.71 86.45L1082.07 87.11" stroke="#7ad151" stroke-width="1.4" stroke-dasharray="1.4 2.1" fill="none"/>
<path d="M975.47 368.90L975.69 368.13L975.91 367.35L976.12 366.57L976.34 365.80L976.55 365.02L976.77 364.24L976.98 363.47L977.19 362.69L977.39 361.91L977.60 361.13L977.81 360.36L978.01 359.58L978.21 358.80L978.42 358.03L978.62 357.25L978.82 356.47L979.01 355.69L979.21 354.92L979.41 354.14L979.60 353.36L979.79 352.58L979.98 351.81L980.17 351.03L980.36 350.25L980.55 349.48L980.73 348.70L980.92 347.92L981.10 347.14L981.28 346.37L981.46 345.59L981.64 344.81L981.82 344.03L982.00 343.26L982.17 342.48L982.34 341.70L982.51 340.92L982.69 340.15L982.85 339.37L983.02 338.59L983.19 337.81L983.35 337.04L983.52 336.26L983.68 335.48L983.84 334.70L984.00 333.93L984.16 333.15L984.31 332.37L984.47 331.59L984.62 330.82L984.77 330.04L984.92 329.26L985.07 328.48L985.22 327.70L985.37 326.93L985.51 326.15L985.65 325.37L985.80 324.59L985.94 323.82L986.08 323.04L986.21 322.26L986.35 321.48L986.48 320.71L986.62 319.93L986.75 319.15L986.88 318.37L987.01 317.60L987.14 316.82L987.26 316.04L987.39 315.26L987.51 314.48L987.63 313.71L987.75 312.93L987.87 312.15L987.98 311.37L988.10 310.60L988.21 309.82L988.33 309.04L988.44 308.26L988.55 307.49L988.65 306.71L988.76 305.93L988.86 305.15L988.97 304.38L989.07 303.60L989.17 302.82L989.27 302.04L989.37 301.27L989.46 300.49L989.56 299.71L989.65 298.93L989.74 298.16L989.83 297.38L989.92 296.60L990.00 295.82L990.09 295.05L990.17 294.27L990.26 293.49L990.34 292.71L990.41 291.94L990.49 291.16L990.57 290.38L990.64 289.60L990.72 288.83L990.79 288.05L990.86 287.27L990.92 286.49L990.99 285.72L991.06 284.94L991.12 284.16L991.18 283.39L991.24 282.61L991.30 281.83L991.36 281.05L991.41 280.28L991.47 279.50L991.52 278.72L991.57 277.95L991.62 277.17L991.67 276.39L991.72 275.61L991.76 274.84L991.81 274.06L991.85 273.28L991.89 272.51L991.93 271.73L991.96 270.95L992.00 270.18L992.03 269.40L992.07 268.62L992.10 267.85L992.13 267.07L992.15 266.29L992.18 265.52L992.21 264.74L992.23 263.96L992.25 263.19L992.27 262.41L992.29 261.63L992.31 260.86L992.32 260.08L992.33 259.30L992.35 258.53L992.36 257.75L992.37 256.98L992.37 256.20L992.38 255.42L992.38 254.65L992.39 253.87L992.39 253.09L992.39 252.32L992.39 251.54L992.38 250.77L992.38 249.99L992.37 249.21L992.36 248.44L992.36 247.66L992.34 246.89L992.33 246.11L992.32 245.34L992.30 244.56L992.28 243.79L992.27 243.01L992.25 242.23L992.22 241.46L992.20 240.68L992.17 239.91L992.15 239.13L992.12 238.36L992.09 237.58L992.06 236.81L992.03 236.03L991.99 235.26L991.96 234.48L991.92 233.71L991.88 232.93L991.84 232.16L991.80 231.38L991.75 230.61L991.71 229.83L991.66 229.06L991.61 228.29L991.56 227.51L991.51 226.74L991.46 225.96L991.41 225.19L991.35 224.41L991.29 223.64L991.24 222.87L991.18 222.09L991.11 221.32L991.05 220.55L990.99 219.77L990.92 219.00L990.85 218.22L990.78 217.45L990.71 216.68L990.64 215.90L990.56 215.13L990.49 214.36L990.41 213.59L990.33 212.81L990.25 212.04L990.17 211.27L990.09 210.49L990.01 209.72L989.92 208.95L989.83 208.18L989.74 207.40L989.65 206.63L989.56 205.86L989.47 205.09L989.38 204.32L989.28 203.55L989.18 202.77L989.08 202.00L988.98 201.23L988.88 200.46L988.78 199.69L988.67 198.92L988.57 198.15L988.46 197.37L988.35 196.60L988.24 195.83L988.13 195.06L988.01 194.29L987.90 193.52L987.78 192.75L987.67 191.98L987.55 191.21L987.43 190.44L987.30 189.67L987.18 188.90L987.06 188.13L986.93 187.36L986.80 186.60L986.68 185.83L986.55 185.06L986.41 184.29L986.28 183.52L986.15 182.75L986.01 181.98L985.87 181.22L985.74 180.45L985.60 179.68L985.45 178.91L985.31 178.15L985.17 177.38L985.02 176.61L984.88 175.84L984.73 175.08L984.58 174.31L984.43 173.55L984.28 172.78L984.13 172.01L983.97 171.25L983.82 170.48L983.66 169.72L983.50 168.95L983.34 168.19L983.18 167.42L983.02 166.66L982.86 165.89L982.69 165.13L982.53 164.37L982.36 163.60L982.19 162.84L982.02 162.08L981.85 161.31L981.68 160.55L981.51 159.79L981.33 159.03L981.16 158.26L980.98 157.50L980.80 156.74L980.63 155.98L980.45 155.22L980.26 154.46L980.08 153.70L979.90 152.94L979.71 152.18L979.53 151.42L979.34 150.66L979.15 149.90L978.96 149.15L978.77 148.39L978.58 147.63L978.39 146.87L978.20 146.12L978.00 145.36L977.81 144.60L977.61 143.85L977.41 143.09L977.21 142.34L977.02 141.58L976.81 140.83L976.61 140.07L976.41 139.32L976.21 138.57L976.00 137.82L975.80 137.06L975.59 136.31L975.38 135.56L975.18 134.81L974.97 134.06L974.76 133.31L974.55 132.56L974.33 131.81L974.12 131.07L973.91 130.32L973.70 129.57L973.48 128.82L973.26 128.08L973.05 127.33L972.83 126.59L972.61 125.84L972.39 125.10L972.18 124.36L971.96 123.62L971.74 122.88L971.51 122.13L971.29 121.39L971.07 120.66L970.85 119.92L970.62 119.18L970.40 118.44L970.17 117.71L969.95 116.97L969.72 116.24L969.50 115.50L969.27 114.77L969.04 114.04L968.82 113.31L968.59 112.58L968.36 111.85L968.13 111.12L967.91 110.39L967.68 109.67L967.45 108.94L967.22 108.22L966.99 107.50L966.76 106.78L966.53 106.06L966.30 105.34L966.07 104.62L965.85 103.90L965.62 103.19L965.39 102.48L965.16 101.76L964.93 101.05L964.70 100.34L964.48 99.64L964.25 98.93L964.02 98.23L963.80 97.52L963.57 96.82L963.35 96.12L963.12 95.43L962.90 94.73L962.68 94.04L962.46 93.35L962.23 92.66L962.02 91.97L961.80 91.29L961.58 90.61L961.36 89.93L961.15 89.25L960.94 88.58L960.73 87.90L960.52 87.23L960.31 86.57L960.11 85.90L959.90 85.24L959.70 84.59L959.51 83.93L959.31 83.28L959.12 82.63L958.93 81.99L958.74 81.35L958.56 80.71L958.38 80.08L958.20 79.45L958.03 78.83L957.86 78.21L957.70 77.60L957.54 76.99L957.38 76.38L957.23 75.78L957.09 75.19L956.95 74.60L956.82 74.02L956.69 73.44L956.57 72.87L956.46 72.30L956.35 71.75L956.26 71.20L956.17 70.65L956.09 70.12L956.02 69.59L955.95 69.07L955.90 68.56L955.86 68.05L955.83 67.56L955.81 67.07L955.81 66.60L955.82 66.13L955.84 65.68L955.87 65.23L955.93 64.80L955.99 64.38L956.08 63.97L956.18 63.57L956.30 63.19L956.44 62.82L956.60 62.46L956.78 62.12L956.98 61.79L957.21 61.47L957.46 61.17L957.74 60.89L958.04 60.62L958.37 60.37L958.72 60.13L959.11 59.92L959.53 59.72L959.97 59.54L960.45 59.37L960.96 59.23L961.51 59.10L962.09 58.99L962.71 58.90L963.36 58.83L964.05 58.78L964.78 58.75L965.54 58.74L966.35 58.75L967.19 58.77L968.08 58.82L969.00 58.89L969.96 58.97L970.97 59.08L972.01 59.20L973.10 59.34L974.23 59.50L975.39 59.68L976.60 59.88L977.84 60.09L979.13 60.33L980.45 60.57L981.81 60.84L983.21 61.12L984.64 61.42L986.12 61.73L987.62 62.05L989.17 62.40L990.74 62.75L992.35 63.12L993.99 63.50L995.67 63.90L997.37 64.30L999.10 64.72L1000.87 65.15L1002.66 65.60L1004.48 66.05L1006.32 66.51L1008.19 66.99L1010.09 67.47L1012.01 67.96L1013.95 68.46L1015.92 68.97L1017.91 69.49L1019.91 70.02L1021.94 70.55L1023.99 71.10L1026.06 71.65L1028.14 72.20L1030.24 72.77L1032.36 73.34L1034.49 73.91L1036.64 74.49L1038.81 75.08L1040.99 75.67L1043.18 76.27L1045.39 76.88L1047.60 77.49L1049.83 78.10L1052.08 78.72L1054.33 79.34L1056.59 79.97L1058.87 80.60L1061.15 81.23L1063.44 81.87L1065.74 82.52L1068.05 83.16L1070.37 83.81L1072.70 84.47L1075.03 85.12L1077.37 85.78L1079.71 86.45L1082.07 87.11" stroke="#7ad151" stroke-width="1.4" stroke-dasharray="1.4 2.1" stroke-dashoffset="1.75" fill="none" transform="translate(0.6 0)"/>
<path d="M974.9 368.8 L982.9 339.9 L986.7 317.4" stroke="#7ad151" stroke-width="1.3" fill="none"/>
<circle cx="974.9" cy="368.8" r="1.3" fill="#ff6030"/><circle cx="982.9" cy="339.9" r="1.3" fill="#ff6030"/>
<path d="M476.25 270.92L475.85 270.79L475.45 270.67L475.04 270.54L474.64 270.42L474.24 270.29L473.84 270.17L473.44 270.04L473.04 269.92L472.64 269.80L472.24 269.67L471.84 269.55L471.44 269.43L471.04 269.31L470.64 269.18L470.24 269.06L469.84 268.94L469.44 268.82L469.03 268.70L468.63 268.58L468.23 268.46L467.83 268.34L467.43 268.22L467.03 268.10L466.63 267.99L466.23 267.87L465.83 267.75L465.42 267.63L465.02 267.52L464.62 267.40L464.22 267.28L463.82 267.17L463.42 267.05L463.01 266.94L462.61 266.82L462.21 266.71L461.81 266.60L461.41 266.48L461.00 266.37L460.60 266.26L460.20 266.14L459.80 266.03L459.39 265.92L458.99 265.81L458.59 265.70L458.18 265.59L457.78 265.48L457.38 265.37L456.97 265.26L456.57 265.15L456.17 265.04L455.76 264.93L455.36 264.82L454.95 264.72L454.55 264.61L454.15 264.50L453.74 264.40L453.34 264.29L452.93 264.18L452.53 264.08L452.12 263.97L451.72 263.87L451.31 263.77L450.91 263.66L450.50 263.56L450.09 263.46L449.69 263.35L449.28 263.25L448.88 263.15L448.47 263.05L448.06 262.95L447.66 262.85L447.25 262.75L446.84 262.65L446.43 262.55L446.03 262.45L445.62 262.35L445.21 262.25L444.80 262.15L444.39 262.06L443.99 261.96L443.58 261.86L443.17 261.77L442.76 261.67L442.35 261.58L441.94 261.48L441.53 261.39L441.12 261.29L440.71 261.20L440.30 261.11L439.89 261.01L439.48 260.92L439.07 260.83L438.66 260.74L438.24 260.65L437.83 260.56L437.42 260.47L437.01 260.38L436.60 260.29L436.18 260.20L435.77 260.11L435.36 260.02L434.94 259.93L434.53 259.85L434.11 259.76L433.70 259.67L433.29 259.59L432.87 259.50L432.46 259.42L432.04 259.33L431.63 259.25L431.21 259.16L430.79 259.08L430.38 259.00L429.96 258.91L429.54 258.83L429.13 258.75L428.71 258.67L428.29 258.59L427.87 258.51L427.45 258.43L427.03 258.35L426.62 258.27L426.20 258.19L425.78 258.11L425.36 258.04L424.94 257.96L424.52 257.88L424.10 257.80L423.67 257.73L423.25 257.65L422.83 257.58L422.41 257.50L421.99 257.43L421.56 257.36L421.14 257.28L420.72 257.21L420.29 257.14L419.87 257.07L419.44 256.99L419.02 256.92L418.59 256.85L418.17 256.78L417.74 256.71L417.32 256.64L416.89 256.57L416.46 256.51L416.04 256.44L415.61 256.37L415.18 256.30L414.75 256.24L414.32 256.17L413.89 256.11L413.46 256.04L413.03 255.98L412.60 255.91L412.17 255.85L411.74 255.79L411.31 255.72L410.88 255.66L410.45 255.60L410.01 255.54L409.58 255.48L409.15 255.42L408.71 255.36L408.28 255.30L407.84 255.24L407.41 255.18L406.97 255.12L406.54 255.06L406.10 255.01L405.67 254.95L405.23 254.89L404.79 254.84L404.35 254.78L403.92 254.73L403.48 254.67L403.04 254.62L402.60 254.57L402.16 254.51L401.72 254.46L401.28 254.41L400.84 254.36L400.39 254.31L399.95 254.26L399.51 254.21L399.07 254.16L398.62 254.11L398.18 254.06L397.73 254.01L397.29 253.96L396.84 253.92L396.40 253.87L395.95 253.82L395.51 253.78L395.06 253.73L394.61 253.69L394.16 253.64L393.72 253.60L393.27 253.56L392.82 253.51L392.37 253.47L391.92 253.43L391.47 253.39L391.02 253.35L390.56 253.31L390.11 253.27L389.66 253.23L389.21 253.19L388.75 253.15L388.30 253.11L387.84 253.08L387.39 253.04L386.93 253.00L386.48 252.97L386.02 252.93L385.56 252.90L385.10 252.86L384.65 252.83L384.19 252.79L383.73 252.76L383.27 252.73L382.81 252.70L382.35 252.67L381.89 252.63L381.43 252.60L380.96 252.57L380.50 252.54L380.04 252.52L379.57 252.49L379.11 252.46L378.65 252.43L378.18 252.40L377.71 252.38L377.25 252.35L376.78 252.33L376.31 252.30L375.85 252.28L375.38 252.25L374.91 252.23L374.44 252.21L373.97 252.18L373.50 252.16L373.03 252.14L372.56 252.12L372.08 252.10L371.61 252.08L371.14 252.06L370.66 252.04L370.19 252.02L369.72 252.00L369.24 251.99L368.76 251.97L368.29 251.95L367.81 251.94L367.33 251.92L366.86 251.91L366.38 251.89L365.90 251.88L365.42 251.86L364.94 251.85L364.46 251.84L363.98 251.83L363.49 251.82L363.01 251.80L362.53 251.79L362.04 251.78L361.56 251.77L361.08 251.77L360.59 251.76L360.10 251.75L359.62 251.74L359.13 251.73L358.64 251.73L358.16 251.72L357.67 251.72L357.18 251.71L356.69 251.71L356.20 251.70L355.71 251.70L355.21 251.70" stroke="#c0c0c0" stroke-opacity="0.5" stroke-width="0.9" stroke-dasharray="1.2 2.3" fill="none"/>
<path d="M1448.74 251.69L1448.24 251.69L1447.74 251.69L1447.25 251.69L1446.75 251.69L1446.26 251.69L1445.76 251.69L1445.27 251.69L1444.78 251.69L1444.29 251.70L1443.79 251.70L1443.30 251.70L1442.81 251.71L1442.32 251.71L1441.83 251.71L1441.34 251.72L1440.85 251.73L1440.37 251.73L1439.88 251.74L1439.39 251.75L1438.91 251.75L1438.42 251.76L1437.94 251.77L1437.45 251.78L1436.97 251.79L1436.48 251.80L1436.00 251.81L1435.52 251.82L1435.04 251.83L1434.56 251.84L1434.07 251.86L1433.59 251.87L1433.11 251.88L1432.64 251.90L1432.16 251.91L1431.68 251.93L1431.20 251.94L1430.73 251.96L1430.25 251.98L1429.77 251.99L1429.30 252.01L1428.82 252.03L1428.35 252.05L1427.88 252.07L1427.40 252.09L1426.93 252.11L1426.46 252.13L1425.99 252.15L1425.52 252.17L1425.04 252.19L1424.57 252.22L1424.11 252.24L1423.64 252.26L1423.17 252.29L1422.70 252.31L1422.23 252.34L1421.77 252.36L1421.30 252.39L1420.83 252.42L1420.37 252.44L1419.90 252.47L1419.44 252.50L1418.98 252.53L1418.51 252.56L1418.05 252.59L1417.59 252.62L1417.13 252.65L1416.67 252.68L1416.20 252.71L1415.74 252.74L1415.28 252.78L1414.83 252.81L1414.37 252.84L1413.91 252.88L1413.45 252.91L1412.99 252.95L1412.54 252.98L1412.08 253.02L1411.63 253.06L1411.17 253.09L1410.72 253.13L1410.26 253.17L1409.81 253.21L1409.35 253.25L1408.90 253.29L1408.45 253.33L1408.00 253.37L1407.55 253.41L1407.09 253.45L1406.64 253.49L1406.19 253.53L1405.74 253.58L1405.30 253.62L1404.85 253.66L1404.40 253.71L1403.95 253.75L1403.50 253.80L1403.06 253.85L1402.61 253.89L1402.16 253.94L1401.72 253.99L1401.27 254.03L1400.83 254.08L1400.39 254.13L1399.94 254.18L1399.50 254.23L1399.06 254.28L1398.61 254.33L1398.17 254.38L1397.73 254.43L1397.29 254.49L1396.85 254.54L1396.41 254.59L1395.97 254.65L1395.53 254.70L1395.09 254.75L1394.65 254.81L1394.21 254.86L1393.78 254.92L1393.34 254.98L1392.90 255.03L1392.46 255.09L1392.03 255.15L1391.59 255.21L1391.16 255.27L1390.72 255.33L1390.29 255.39L1389.85 255.45L1389.42 255.51L1388.99 255.57L1388.55 255.63L1388.12 255.69L1387.69 255.75L1387.26 255.82L1386.83 255.88L1386.39 255.94L1385.96 256.01L1385.53 256.07L1385.10 256.14L1384.67 256.20L1384.25 256.27L1383.82 256.34L1383.39 256.40L1382.96 256.47L1382.53 256.54L1382.10 256.61L1381.68 256.68L1381.25 256.75L1380.82 256.82L1380.40 256.89L1379.97 256.96L1379.55 257.03L1379.12 257.10L1378.70 257.17L1378.27 257.25L1377.85 257.32L1377.43 257.39L1377.00 257.47L1376.58 257.54L1376.16 257.61L1375.73 257.69L1375.31 257.77L1374.89 257.84L1374.47 257.92L1374.05 258.00L1373.63 258.07L1373.21 258.15L1372.79 258.23L1372.37 258.31L1371.95 258.39L1371.53 258.47L1371.11 258.55L1370.69 258.63L1370.27 258.71L1369.85 258.79L1369.44 258.87L1369.02 258.95L1368.60 259.04L1368.18 259.12L1367.77 259.20L1367.35 259.29L1366.93 259.37L1366.52 259.46L1366.10 259.54L1365.69 259.63L1365.27 259.72L1364.86 259.80L1364.44 259.89L1364.03 259.98L1363.61 260.06L1363.20 260.15L1362.79 260.24L1362.37 260.33L1361.96 260.42L1361.55 260.51L1361.13 260.60L1360.72 260.69L1360.31 260.78L1359.90 260.87L1359.49 260.97L1359.07 261.06L1358.66 261.15L1358.25 261.25L1357.84 261.34L1357.43 261.43L1357.02 261.53L1356.61 261.62L1356.20 261.72L1355.79 261.81L1355.38 261.91L1354.97 262.01L1354.56 262.10L1354.15 262.20L1353.74 262.30L1353.33 262.40L1352.93 262.50L1352.52 262.60L1352.11 262.70L1351.70 262.80L1351.29 262.90L1350.89 263.00L1350.48 263.10L1350.07 263.20L1349.66 263.30L1349.26 263.40L1348.85 263.51L1348.44 263.61L1348.04 263.71L1347.63 263.82L1347.22 263.92L1346.82 264.03L1346.41 264.13L1346.01 264.24L1345.60 264.34L1345.20 264.45L1344.79 264.55L1344.39 264.66L1343.98 264.77L1343.58 264.88L1343.17 264.98L1342.77 265.09L1342.36 265.20L1341.96 265.31L1341.55 265.42L1341.15 265.53L1340.75 265.64L1340.34 265.75L1339.94 265.86L1339.53 265.97L1339.13 266.09L1338.73 266.20L1338.32 266.31L1337.92 266.42L1337.52 266.54L1337.11 266.65L1336.71 266.77L1336.31 266.88L1335.90 266.99L1335.50 267.11L1335.10 267.23L1334.70 267.34L1334.29 267.46L1333.89 267.57L1333.49 267.69L1333.09 267.81L1332.68 267.93L1332.28 268.04L1331.88 268.16L1331.48 268.28L1331.08 268.40L1330.67 268.52L1330.27 268.64L1329.87 268.76L1329.47 268.88L1329.07 269.00L1328.67 269.12L1328.26 269.24L1327.86 269.37L1327.46 269.49L1327.06 269.61L1326.66 269.73L1326.26 269.86L1325.85 269.98L1325.45 270.11L1325.05 270.23L1324.65 270.35L1324.25 270.48L1323.85 270.60L1323.45 270.73L1323.05 270.86L1322.64 270.98L1322.24 271.11L1321.84 271.24L1321.44 271.36L1321.04 271.49L1320.64 271.62L1320.24 271.75L1319.83 271.88L1319.43 272.00L1319.03 272.13L1318.63 272.26L1318.23 272.39L1317.83 272.52L1317.43 272.65L1317.03 272.79L1316.62 272.92L1316.22 273.05L1315.82 273.18L1315.42 273.31L1315.02 273.44L1314.62 273.58L1314.22 273.71L1313.81 273.84L1313.41 273.98L1313.01 274.11L1312.61 274.25L1312.21 274.38L1311.80 274.51L1311.40 274.65L1311.00 274.79L1310.60 274.92L1310.20 275.06L1309.79 275.19L1309.39 275.33L1308.99 275.47L1308.59 275.60L1308.19 275.74L1307.78 275.88L1307.38 276.02L1306.98 276.16L1306.58 276.30L1306.17 276.43L1305.77 276.57L1305.37 276.71L1304.96 276.85L1304.56 276.99L1304.16 277.13L1303.76 277.28L1303.35 277.42L1302.95 277.56L1302.55 277.70L1302.14 277.84L1301.74 277.98L1301.33 278.13L1300.93 278.27L1300.53 278.41L1300.12 278.55L1299.72 278.70L1299.31 278.84L1298.91 278.99L1298.51 279.13L1298.10 279.28L1297.70 279.42L1297.29 279.57L1296.89 279.71L1296.48 279.86L1296.08 280.00L1295.67 280.15L1295.27 280.30L1294.86 280.44L1294.46 280.59L1294.05 280.74L1293.64 280.88L1293.24 281.03L1292.83 281.18L1292.43 281.33L1292.02 281.48L1291.61 281.62L1291.21 281.77L1290.80 281.92L1290.39 282.07L1289.98 282.22L1289.58 282.37L1289.17 282.52L1288.76 282.67L1288.35 282.82L1287.95 282.98L1287.54 283.13L1287.13 283.28L1286.72 283.43L1286.31 283.58L1285.91 283.73L1285.50 283.89L1285.09 284.04L1284.68 284.19L1284.27 284.34L1283.86 284.50L1283.45 284.65L1283.04 284.81L1282.63 284.96L1282.22 285.11L1281.81 285.27L1281.40 285.42L1280.99 285.58L1280.58 285.73L1280.17 285.89L1279.76 286.04L1279.34 286.20L1278.93 286.36L1278.52 286.51L1278.11 286.67L1277.70 286.83L1277.29 286.98L1276.87 287.14L1276.46 287.30L1276.05 287.45L1275.63 287.61L1275.22 287.77L1274.81 287.93L1274.39 288.09L1273.98 288.25L1273.57 288.40L1273.15 288.56L1272.74 288.72L1272.32 288.88L1271.91 289.04L1271.49 289.20L1271.08 289.36L1270.66 289.52L1270.25 289.68L1269.83 289.84L1269.41 290.00L1269.00 290.16L1268.58 290.32L1268.17 290.49L1267.75 290.65L1267.33 290.81L1266.91 290.97L1266.50 291.13L1266.08 291.30L1265.66 291.46L1265.24 291.62L1264.82 291.78L1264.41 291.95L1263.99 292.11L1263.57 292.27L1263.15 292.44L1262.73 292.60L1262.31 292.76L1261.89 292.93L1261.47 293.09L1261.05 293.26L1260.63 293.42L1260.21 293.59L1259.78 293.75L1259.36 293.92L1258.94 294.08L1258.52 294.25L1258.10 294.41L1257.68 294.58L1257.25 294.74L1256.83 294.91L1256.41 295.08L1255.98 295.24L1255.56 295.41L1255.14 295.57L1254.71 295.74L1254.29 295.91L1253.86 296.08L1253.44 296.24L1253.01 296.41L1252.59 296.58L1252.16 296.75L1251.74 296.91L1251.31 297.08L1250.88 297.25L1250.46 297.42L1250.03 297.59L1249.60 297.76L1249.18 297.92L1248.75 298.09L1248.32 298.26L1247.89 298.43L1247.46 298.60L1247.04 298.77L1246.61 298.94L1246.18 299.11L1245.75 299.28L1245.32 299.45L1244.89 299.62L1244.46 299.79L1244.03 299.96L1243.60 300.13L1243.17 300.30L1242.74 300.47L1242.31 300.64L1241.87 300.81L1241.44 300.98L1241.01 301.15L1240.58 301.33L1240.14 301.50L1239.71 301.67L1239.28 301.84L1238.84 302.01L1238.41 302.18L1237.98 302.36L1237.54 302.53L1237.11 302.70L1236.67 302.87L1236.24 303.04L1235.80 303.22L1235.37 303.39L1234.93 303.56L1234.49 303.74L1234.06 303.91L1233.62 304.08L1233.18 304.25L1232.75 304.43L1232.31 304.60L1231.87 304.77L1231.43 304.95L1231.00 305.12L1230.56 305.30L1230.12 305.47L1229.68 305.64L1229.24 305.82L1228.80 305.99L1228.36 306.17L1227.92 306.34" stroke="#c0c0c0" stroke-opacity="0.5" stroke-width="0.9" stroke-dasharray="1.2 2.3" fill="none"/>
<path d="M476 271.4 L488.3 275.2" stroke="#a0a0a0" stroke-width="1.1" fill="none"/>
<polygon points="1081.50,83.30 1082.44,85.81 1085.11,85.93 1083.02,87.59 1083.73,90.17 1081.50,88.70 1079.27,90.17 1079.98,87.59 1077.89,85.93 1080.56,85.81" fill="#ff0000"/>
<text x="1072.13" y="90.80" textLength="21.35" lengthAdjust="spacingAndGlyphs" font-family="Liberation Sans" font-size="10.30" fill="#fff">DKD</text>
<g font-family="Liberation Mono" font-size="15.37" fill="#fff"><text x="315.0" y="30.0" xml:space="preserve" textLength="50.17" lengthAdjust="spacingAndGlyphs">ES000C</text><text x="315.0" y="43.0" xml:space="preserve" textLength="317.77" lengthAdjust="spacingAndGlyphs">Beg: 20251204 18:32:37 (sol = 252.51°)</text><text x="315.0" y="56.4" xml:space="preserve" textLength="317.77" lengthAdjust="spacingAndGlyphs">End: 20251205 06:10:42 (sol = 253.00°)</text><text x="315.0" y="69.0" xml:space="preserve" textLength="317.77" lengthAdjust="spacingAndGlyphs">--------------------------------------</text><text x="315.0" y="82.0" xml:space="preserve" textLength="50.17" lengthAdjust="spacingAndGlyphs">DKD: 2</text><text x="315.0" y="95.0" xml:space="preserve" textLength="50.17" lengthAdjust="spacingAndGlyphs">...: 1</text></g>
<g stroke="#808080" stroke-opacity="0.8" stroke-width="2.083" stroke-dasharray="2.083 3.4375"><path d="M73.46 842.30 L73.46 641.40"/><path d="M218.67 842.30 L218.67 641.40"/><path d="M364.36 842.30 L364.36 641.40"/><path d="M505.15 842.30 L505.15 641.40"/><path d="M650.35 842.30 L650.35 641.40"/><path d="M797.03 842.30 L797.03 641.40"/><path d="M940.27 842.30 L940.27 641.40"/><path d="M1090.38 842.30 L1090.38 641.40"/><path d="M1239.51 842.30 L1239.51 641.40"/><path d="M1394.04 842.30 L1394.04 641.40"/><path d="M1548.07 842.30 L1548.07 641.40"/><path d="M1687.39 842.30 L1687.39 641.40"/></g>
<g font-family="Liberation Sans" font-size="29.43" fill="#525252" stroke="#525252" stroke-width="0.3"><text transform="translate(148.66 642.90) rotate(-90)" x="0" y="0" text-anchor="end" textLength="55.06" lengthAdjust="spacingAndGlyphs">APR</text><text transform="translate(293.88 642.90) rotate(-90)" x="0" y="0" text-anchor="end" textLength="57.78" lengthAdjust="spacingAndGlyphs">MAY</text><text transform="translate(435.60 642.90) rotate(-90)" x="0" y="0" text-anchor="end" textLength="49.31" lengthAdjust="spacingAndGlyphs">JUN</text><text transform="translate(576.38 642.90) rotate(-90)" x="0" y="0" text-anchor="end" textLength="44.01" lengthAdjust="spacingAndGlyphs">JUL</text><text transform="translate(724.10 642.90) rotate(-90)" x="0" y="0" text-anchor="end" textLength="60.86" lengthAdjust="spacingAndGlyphs">AUG</text><text transform="translate(871.76 642.90) rotate(-90)" x="0" y="0" text-anchor="end" textLength="51.94" lengthAdjust="spacingAndGlyphs">SEP</text><text transform="translate(1016.47 642.90) rotate(-90)" x="0" y="0" text-anchor="end" textLength="58.23" lengthAdjust="spacingAndGlyphs">OCT</text><text transform="translate(1168.54 642.90) rotate(-90)" x="0" y="0" text-anchor="end" textLength="61.17" lengthAdjust="spacingAndGlyphs">NOV</text><text transform="translate(1317.18 642.90) rotate(-90)" x="0" y="0" text-anchor="end" textLength="58.34" lengthAdjust="spacingAndGlyphs">DEC</text><text transform="translate(1468.71 642.90) rotate(-90)" x="0" y="0" text-anchor="end" textLength="47.50" lengthAdjust="spacingAndGlyphs">JAN</text><text transform="translate(1626.72 642.90) rotate(-90)" x="0" y="0" text-anchor="end" textLength="52.59" lengthAdjust="spacingAndGlyphs">FEB</text><text transform="translate(1766.04 642.90) rotate(-90)" x="0" y="0" text-anchor="end" textLength="62.27" lengthAdjust="spacingAndGlyphs">MAR</text></g>
<rect x="105.72" y="831.92" width="23.79" height="4.167" fill="#bddf26"/><rect x="164.58" y="831.92" width="180.77" height="4.167" fill="#bddf26"/><rect x="365.71" y="831.92" width="259.25" height="4.167" fill="#bddf26"/><rect x="635.52" y="831.92" width="151.33" height="4.167" fill="#bddf26"/><rect x="807.21" y="831.92" width="92.47" height="4.167" fill="#bddf26"/><rect x="920.04" y="831.92" width="53.22" height="4.167" fill="#bddf26"/><rect x="983.81" y="831.92" width="82.65" height="4.167" fill="#bddf26"/><rect x="1081.92" y="831.92" width="121.90" height="4.167" fill="#bddf26"/><rect x="1243.81" y="831.92" width="82.65" height="4.167" fill="#bddf26"/><rect x="1337.01" y="831.92" width="18.88" height="4.167" fill="#bddf26"/><rect x="1381.16" y="831.92" width="63.03" height="4.167" fill="#bddf26"/><rect x="1459.65" y="831.92" width="53.22" height="4.167" fill="#bddf26"/><rect x="1523.42" y="831.92" width="23.79" height="4.167" fill="#bddf26"/><rect x="1724.55" y="831.92" width="23.79" height="4.167" fill="#bddf26"/><rect x="1758.89" y="831.92" width="23.79" height="4.167" fill="#bddf26"/><rect x="164.58" y="815.59" width="23.79" height="4.167" fill="#7ad151"/><rect x="223.45" y="815.59" width="63.03" height="4.167" fill="#7ad151"/><rect x="311.75" y="815.59" width="28.69" height="4.167" fill="#7ad151"/><rect x="365.71" y="815.59" width="126.80" height="4.167" fill="#7ad151"/><rect x="507.97" y="815.59" width="146.43" height="4.167" fill="#7ad151"/><rect x="704.19" y="815.59" width="33.60" height="4.167" fill="#7ad151"/><rect x="772.87" y="815.59" width="72.84" height="4.167" fill="#7ad151"/><rect x="870.98" y="815.59" width="116.99" height="4.167" fill="#7ad151"/><rect x="1003.43" y="815.59" width="13.98" height="4.167" fill="#7ad151"/><rect x="1062.30" y="815.59" width="151.33" height="4.167" fill="#7ad151"/><rect x="1243.81" y="815.59" width="23.79" height="4.167" fill="#7ad151"/><rect x="1292.86" y="815.59" width="23.79" height="4.167" fill="#7ad151"/><rect x="1341.92" y="815.59" width="23.79" height="4.167" fill="#7ad151"/><rect x="1386.07" y="815.59" width="43.41" height="4.167" fill="#7ad151"/><rect x="1459.65" y="815.59" width="23.79" height="4.167" fill="#7ad151"/><rect x="1547.95" y="815.59" width="23.79" height="4.167" fill="#7ad151"/><rect x="164.58" y="799.26" width="23.79" height="4.167" fill="#52c569"/><rect x="257.79" y="799.26" width="229.82" height="4.167" fill="#52c569"/><rect x="507.97" y="799.26" width="107.18" height="4.167" fill="#52c569"/><rect x="625.71" y="799.26" width="92.47" height="4.167" fill="#52c569"/><rect x="728.72" y="799.26" width="97.37" height="4.167" fill="#52c569"/><rect x="949.47" y="799.26" width="200.39" height="4.167" fill="#52c569"/><rect x="1160.41" y="799.26" width="87.56" height="4.167" fill="#52c569"/><rect x="1258.52" y="799.26" width="185.67" height="4.167" fill="#52c569"/><rect x="1459.65" y="799.26" width="23.79" height="4.167" fill="#52c569"/><rect x="1552.86" y="799.26" width="23.79" height="4.167" fill="#52c569"/><rect x="194.02" y="782.93" width="23.79" height="4.167" fill="#2fb47c"/><rect x="321.56" y="782.93" width="185.67" height="4.167" fill="#2fb47c"/><rect x="517.78" y="782.93" width="23.79" height="4.167" fill="#2fb47c"/><rect x="557.03" y="782.93" width="126.80" height="4.167" fill="#2fb47c"/><rect x="807.21" y="782.93" width="23.79" height="4.167" fill="#2fb47c"/><rect x="954.38" y="782.93" width="18.88" height="4.167" fill="#2fb47c"/><rect x="988.72" y="782.93" width="136.62" height="4.167" fill="#2fb47c"/><rect x="1155.51" y="782.93" width="63.03" height="4.167" fill="#2fb47c"/><rect x="1243.81" y="782.93" width="23.79" height="4.167" fill="#2fb47c"/><rect x="1317.39" y="782.93" width="23.79" height="4.167" fill="#2fb47c"/><rect x="1395.88" y="782.93" width="23.79" height="4.167" fill="#2fb47c"/><rect x="1464.56" y="782.93" width="185.67" height="4.167" fill="#2fb47c"/><rect x="341.18" y="766.60" width="28.69" height="4.167" fill="#20a286"/><rect x="409.86" y="766.60" width="38.50" height="4.167" fill="#20a286"/><rect x="468.73" y="766.60" width="23.79" height="4.167" fill="#20a286"/><rect x="527.59" y="766.60" width="18.88" height="4.167" fill="#20a286"/><rect x="561.93" y="766.60" width="28.69" height="4.167" fill="#20a286"/><rect x="615.89" y="766.60" width="33.60" height="4.167" fill="#20a286"/><rect x="959.28" y="766.60" width="28.69" height="4.167" fill="#20a286"/><rect x="1062.30" y="766.60" width="23.79" height="4.167" fill="#20a286"/><rect x="1101.54" y="766.60" width="23.79" height="4.167" fill="#20a286"/><rect x="1160.41" y="766.60" width="33.60" height="4.167" fill="#20a286"/><rect x="1248.71" y="766.60" width="23.79" height="4.167" fill="#20a286"/><rect x="1425.31" y="766.60" width="87.56" height="4.167" fill="#20a286"/><rect x="419.67" y="750.27" width="23.79" height="4.167" fill="#25848e"/><rect x="532.50" y="750.27" width="23.79" height="4.167" fill="#25848e"/><rect x="566.84" y="750.27" width="23.79" height="4.167" fill="#25848e"/><rect x="620.80" y="750.27" width="121.90" height="4.167" fill="#25848e"/><rect x="969.09" y="750.27" width="166.05" height="4.167" fill="#25848e"/><rect x="1184.94" y="750.27" width="161.14" height="4.167" fill="#25848e"/><rect x="1469.46" y="750.27" width="23.79" height="4.167" fill="#25848e"/><rect x="429.48" y="733.94" width="23.79" height="4.167" fill="#2f6c8e"/><rect x="576.65" y="733.94" width="156.24" height="4.167" fill="#2f6c8e"/><rect x="993.62" y="733.94" width="112.09" height="4.167" fill="#2f6c8e"/><rect x="1116.26" y="733.94" width="107.18" height="4.167" fill="#2f6c8e"/><rect x="1263.43" y="733.94" width="28.69" height="4.167" fill="#2f6c8e"/><rect x="1489.08" y="733.94" width="23.79" height="4.167" fill="#2f6c8e"/><rect x="591.37" y="717.61" width="23.79" height="4.167" fill="#3b528b"/><rect x="655.14" y="717.61" width="116.99" height="4.167" fill="#3b528b"/><rect x="1072.11" y="717.61" width="170.95" height="4.167" fill="#3b528b"/><rect x="1263.43" y="717.61" width="23.79" height="4.167" fill="#3b528b"/><rect x="596.27" y="701.28" width="136.62" height="4.167" fill="#414487"/><rect x="1091.73" y="701.28" width="28.69" height="4.167" fill="#414487"/><rect x="1199.66" y="701.28" width="23.79" height="4.167" fill="#414487"/><rect x="1273.24" y="701.28" width="53.22" height="4.167" fill="#414487"/><rect x="1111.36" y="684.95" width="23.79" height="4.167" fill="#463480"/>
<g font-family="Liberation Sans" font-size="10.30" fill="#fff"><text x="108.27" y="831.30" textLength="18.68" lengthAdjust="spacingAndGlyphs">KSE</text><text x="245.98" y="831.30" textLength="17.97" lengthAdjust="spacingAndGlyphs">ETA</text><text x="484.98" y="831.30" textLength="20.72" lengthAdjust="spacingAndGlyphs">NZC</text><text x="700.56" y="831.30" textLength="21.24" lengthAdjust="spacingAndGlyphs">NDA</text><text x="844.36" y="831.30" textLength="18.18" lengthAdjust="spacingAndGlyphs">SPE</text><text x="936.21" y="831.30" textLength="20.89" lengthAdjust="spacingAndGlyphs">ARD</text><text x="1015.23" y="831.30" textLength="19.82" lengthAdjust="spacingAndGlyphs">EGE</text><text x="1133.32" y="831.30" textLength="19.10" lengthAdjust="spacingAndGlyphs">NTA</text><text x="1273.48" y="831.30" textLength="23.31" lengthAdjust="spacingAndGlyphs">MON</text><text x="1333.98" y="831.30" textLength="20.05" lengthAdjust="spacingAndGlyphs">URS</text><text x="1402.72" y="831.30" textLength="19.92" lengthAdjust="spacingAndGlyphs">AHY</text><text x="1474.74" y="831.30" textLength="23.04" lengthAdjust="spacingAndGlyphs">GUM</text><text x="1524.86" y="831.30" textLength="20.92" lengthAdjust="spacingAndGlyphs">OHY</text><text x="1726.39" y="831.30" textLength="20.11" lengthAdjust="spacingAndGlyphs">XHE</text><text x="1762.95" y="831.30" textLength="15.66" lengthAdjust="spacingAndGlyphs">EVI</text><text x="166.81" y="814.97" textLength="19.34" lengthAdjust="spacingAndGlyphs">AVB</text><text x="246.86" y="814.97" textLength="16.22" lengthAdjust="spacingAndGlyphs">ELY</text><text x="312.73" y="814.97" textLength="21.82" lengthAdjust="spacingAndGlyphs">CAM</text><text x="421.63" y="814.97" textLength="19.87" lengthAdjust="spacingAndGlyphs">SSG</text><text x="569.09" y="814.97" textLength="19.30" lengthAdjust="spacingAndGlyphs">PCA</text><text x="710.37" y="814.97" textLength="21.25" lengthAdjust="spacingAndGlyphs">AUD</text><text x="799.03" y="814.97" textLength="20.52" lengthAdjust="spacingAndGlyphs">AUR</text><text x="921.78" y="814.97" textLength="20.32" lengthAdjust="spacingAndGlyphs">DSX</text><text x="999.65" y="814.97" textLength="21.55" lengthAdjust="spacingAndGlyphs">OCU</text><text x="1127.69" y="814.97" textLength="20.55" lengthAdjust="spacingAndGlyphs">OER</text><text x="1245.03" y="814.97" textLength="21.35" lengthAdjust="spacingAndGlyphs">DKD</text><text x="1294.60" y="814.97" textLength="20.31" lengthAdjust="spacingAndGlyphs">DSV</text><text x="1345.45" y="814.97" textLength="16.73" lengthAdjust="spacingAndGlyphs">ALY</text><text x="1400.31" y="814.97" textLength="14.93" lengthAdjust="spacingAndGlyphs">JLE</text><text x="1461.67" y="814.97" textLength="19.74" lengthAdjust="spacingAndGlyphs">SCC</text><text x="1550.65" y="814.97" textLength="18.38" lengthAdjust="spacingAndGlyphs">FEV</text><text x="168.07" y="798.64" textLength="16.82" lengthAdjust="spacingAndGlyphs">LYR</text><text x="363.43" y="798.64" textLength="18.55" lengthAdjust="spacingAndGlyphs">JMC</text><text x="551.42" y="798.64" textLength="15.38" lengthAdjust="spacingAndGlyphs">JPE</text><text x="662.44" y="798.64" textLength="19.00" lengthAdjust="spacingAndGlyphs">PAU</text><text x="766.56" y="798.64" textLength="16.79" lengthAdjust="spacingAndGlyphs">NIA</text><text x="1040.67" y="798.64" textLength="18.00" lengthAdjust="spacingAndGlyphs">STA</text><text x="1195.36" y="798.64" textLength="22.57" lengthAdjust="spacingAndGlyphs">NOO</text><text x="1342.40" y="798.64" textLength="22.82" lengthAdjust="spacingAndGlyphs">COM</text><text x="1461.12" y="798.64" textLength="20.84" lengthAdjust="spacingAndGlyphs">NCC</text><text x="1555.14" y="798.64" textLength="19.22" lengthAdjust="spacingAndGlyphs">FED</text><text x="197.50" y="782.31" textLength="16.83" lengthAdjust="spacingAndGlyphs">HVI</text><text x="403.81" y="782.31" textLength="16.27" lengthAdjust="spacingAndGlyphs">ARI</text><text x="519.87" y="782.31" textLength="19.62" lengthAdjust="spacingAndGlyphs">SZC</text><text x="608.33" y="782.31" textLength="19.30" lengthAdjust="spacingAndGlyphs">CAP</text><text x="808.84" y="782.31" textLength="20.53" lengthAdjust="spacingAndGlyphs">NUE</text><text x="951.17" y="782.31" textLength="20.40" lengthAdjust="spacingAndGlyphs">OCT</text><text x="1050.84" y="782.31" textLength="17.27" lengthAdjust="spacingAndGlyphs">ORI</text><text x="1175.68" y="782.31" textLength="22.68" lengthAdjust="spacingAndGlyphs">AMO</text><text x="1245.63" y="782.31" textLength="20.13" lengthAdjust="spacingAndGlyphs">DPC</text><text x="1321.20" y="782.31" textLength="16.17" lengthAdjust="spacingAndGlyphs">XVI</text><text x="1397.07" y="782.31" textLength="21.41" lengthAdjust="spacingAndGlyphs">QUA</text><text x="1549.42" y="782.31" textLength="20.84" lengthAdjust="spacingAndGlyphs">AAN</text><text x="343.49" y="765.98" textLength="19.17" lengthAdjust="spacingAndGlyphs">TAH</text><text x="423.48" y="765.98" textLength="16.16" lengthAdjust="spacingAndGlyphs">JEA</text><text x="474.57" y="765.98" textLength="12.10" lengthAdjust="spacingAndGlyphs">JIP</text><text x="530.54" y="765.98" textLength="17.89" lengthAdjust="spacingAndGlyphs">PPS</text><text x="568.93" y="765.98" textLength="19.62" lengthAdjust="spacingAndGlyphs">ZCS</text><text x="621.81" y="765.98" textLength="21.77" lengthAdjust="spacingAndGlyphs">GDR</text><text x="960.93" y="765.98" textLength="20.49" lengthAdjust="spacingAndGlyphs">DRA</text><text x="1063.98" y="765.98" textLength="20.43" lengthAdjust="spacingAndGlyphs">LUM</text><text x="1103.57" y="765.98" textLength="19.73" lengthAdjust="spacingAndGlyphs">RPU</text><text x="1167.25" y="765.98" textLength="19.93" lengthAdjust="spacingAndGlyphs">THA</text><text x="1251.03" y="765.98" textLength="19.15" lengthAdjust="spacingAndGlyphs">PSU</text><text x="1461.84" y="765.98" textLength="19.41" lengthAdjust="spacingAndGlyphs">XCB</text><text x="423.35" y="749.65" textLength="16.43" lengthAdjust="spacingAndGlyphs">JRC</text><text x="534.04" y="749.65" textLength="20.71" lengthAdjust="spacingAndGlyphs">CAN</text><text x="569.42" y="749.65" textLength="18.62" lengthAdjust="spacingAndGlyphs">FAN</text><text x="672.37" y="749.65" textLength="18.76" lengthAdjust="spacingAndGlyphs">PER</text><text x="1040.35" y="749.65" textLength="18.62" lengthAdjust="spacingAndGlyphs">CTA</text><text x="1255.14" y="749.65" textLength="20.74" lengthAdjust="spacingAndGlyphs">HYD</text><text x="1470.27" y="749.65" textLength="22.16" lengthAdjust="spacingAndGlyphs">XUM</text><text x="430.78" y="733.32" textLength="21.19" lengthAdjust="spacingAndGlyphs">COR</text><text x="647.16" y="733.32" textLength="20.13" lengthAdjust="spacingAndGlyphs">SDA</text><text x="1041.33" y="733.32" textLength="16.67" lengthAdjust="spacingAndGlyphs">LMI</text><text x="1157.80" y="733.32" textLength="19.21" lengthAdjust="spacingAndGlyphs">LEO</text><text x="1265.62" y="733.32" textLength="19.41" lengthAdjust="spacingAndGlyphs">EHY</text><text x="1491.19" y="733.32" textLength="19.58" lengthAdjust="spacingAndGlyphs">ECV</text><text x="594.92" y="716.99" textLength="16.68" lengthAdjust="spacingAndGlyphs">JXA</text><text x="706.01" y="716.99" textLength="20.16" lengthAdjust="spacingAndGlyphs">KCG</text><text x="1146.89" y="716.99" textLength="21.41" lengthAdjust="spacingAndGlyphs">AND</text><text x="1264.60" y="716.99" textLength="21.46" lengthAdjust="spacingAndGlyphs">DAD</text><text x="659.15" y="700.66" textLength="15.77" lengthAdjust="spacingAndGlyphs">ERI</text><text x="1099.00" y="700.66" textLength="19.07" lengthAdjust="spacingAndGlyphs">SLD</text><text x="1201.26" y="700.66" textLength="20.58" lengthAdjust="spacingAndGlyphs">ORS</text><text x="1288.82" y="700.66" textLength="22.06" lengthAdjust="spacingAndGlyphs">GEM</text><text x="1112.44" y="684.33" textLength="21.62" lengthAdjust="spacingAndGlyphs">KUM</text></g>
<path d="M113.45 834.00h8.33M117.61 829.84v8.33M240.99 834.00h8.33M245.16 829.84v8.33M510.80 834.00h8.33M514.96 829.84v8.33M707.02 834.00h8.33M711.18 829.84v8.33M832.11 834.00h8.33M836.28 829.84v8.33M962.11 834.00h8.33M966.27 829.84v8.33M986.64 834.00h8.33M990.80 829.84v8.33M1116.63 834.00h8.33M1120.80 829.84v8.33M1295.69 834.00h8.33M1299.85 829.84v8.33M1342.29 834.00h8.33M1346.45 829.84v8.33M1413.42 834.00h8.33M1417.58 829.84v8.33M1482.10 834.00h8.33M1486.26 829.84v8.33M1531.15 834.00h8.33M1535.32 829.84v8.33M1732.28 834.00h8.33M1736.44 829.84v8.33M1766.62 834.00h8.33M1770.78 829.84v8.33M172.31 817.67h8.33M176.48 813.50v8.33M255.71 817.67h8.33M259.87 813.50v8.33M321.93 817.67h8.33M326.10 813.50v8.33M437.21 817.67h8.33M441.38 813.50v8.33M599.10 817.67h8.33M603.26 813.50v8.33M716.83 817.67h8.33M720.99 813.50v8.33M792.87 817.67h8.33M797.03 813.50v8.33M940.03 817.67h8.33M944.20 813.50v8.33M1006.26 817.67h8.33M1010.42 813.50v8.33M1153.42 817.67h8.33M1157.59 813.50v8.33M1251.54 817.67h8.33M1255.70 813.50v8.33M1300.59 817.67h8.33M1304.76 813.50v8.33M1349.65 817.67h8.33M1353.81 813.50v8.33M1403.61 817.67h8.33M1407.77 813.50v8.33M1467.38 817.67h8.33M1471.54 813.50v8.33M1555.68 817.67h8.33M1559.84 813.50v8.33M174.77 801.34h8.33M178.93 797.18v8.33M378.35 801.34h8.33M382.51 797.18v8.33M545.14 801.34h8.33M549.30 797.18v8.33M682.49 801.34h8.33M686.66 797.18v8.33M741.36 801.34h8.33M745.52 797.18v8.33M1074.94 801.34h8.33M1079.10 797.18v8.33M1217.20 801.34h8.33M1221.36 797.18v8.33M1305.50 801.34h8.33M1309.66 797.18v8.33M1467.38 801.34h8.33M1471.54 797.18v8.33M1560.59 801.34h8.33M1564.75 797.18v8.33M201.75 785.01h8.33M205.91 780.85v8.33M400.42 785.01h8.33M404.59 780.85v8.33M525.51 785.01h8.33M529.68 780.85v8.33M638.34 785.01h8.33M642.51 780.85v8.33M814.94 785.01h8.33M819.11 780.85v8.33M959.65 785.01h8.33M963.82 780.85v8.33M1040.60 785.01h8.33M1044.76 780.85v8.33M1187.76 785.01h8.33M1191.93 780.85v8.33M1251.54 785.01h8.33M1255.70 780.85v8.33M1325.12 785.01h8.33M1329.28 780.85v8.33M1403.61 785.01h8.33M1407.77 780.85v8.33M1545.87 785.01h8.33M1550.03 780.85v8.33M356.27 768.68h8.33M360.44 764.52v8.33M424.95 768.68h8.33M429.11 764.52v8.33M476.46 768.68h8.33M480.62 764.52v8.33M535.32 768.68h8.33M539.49 764.52v8.33M572.12 768.68h8.33M576.28 764.52v8.33M630.98 768.68h8.33M635.15 764.52v8.33M974.37 768.68h8.33M978.54 764.52v8.33M1070.03 768.68h8.33M1074.19 764.52v8.33M1109.27 768.68h8.33M1113.44 764.52v8.33M1177.95 768.68h8.33M1182.12 764.52v8.33M1256.44 768.68h8.33M1260.61 764.52v8.33M1467.38 768.68h8.33M1471.54 764.52v8.33M427.40 752.35h8.33M431.57 748.19v8.33M540.23 752.35h8.33M544.39 748.19v8.33M574.57 752.35h8.33M578.73 748.19v8.33M704.57 752.35h8.33M708.73 748.19v8.33M1094.56 752.35h8.33M1098.72 748.19v8.33M1271.16 752.35h8.33M1275.32 748.19v8.33M1477.19 752.35h8.33M1481.36 748.19v8.33M437.21 736.02h8.33M441.38 731.86v8.33M630.98 736.02h8.33M635.15 731.86v8.33M1038.14 736.02h8.33M1042.31 731.86v8.33M1168.14 736.02h8.33M1172.31 731.86v8.33M1276.06 736.02h8.33M1280.23 731.86v8.33M1496.81 736.02h8.33M1500.98 731.86v8.33M599.10 719.69h8.33M603.26 715.53v8.33M726.64 719.69h8.33M730.81 715.53v8.33M1187.76 719.69h8.33M1191.93 715.53v8.33M1271.16 719.69h8.33M1275.32 715.53v8.33M687.40 703.36h8.33M691.56 699.20v8.33M1101.92 703.36h8.33M1106.08 699.20v8.33M1207.39 703.36h8.33M1211.55 699.20v8.33M1300.59 703.36h8.33M1304.76 699.20v8.33M1119.09 687.03h8.33M1123.25 682.87v8.33" stroke="#fff" stroke-width="2.083" fill="none"/>
<path d="M1258.20 842.30 L1258.20 641.40" stroke="#ff0000" stroke-width="1.389" stroke-dasharray="5.14 2.22"/>
<path d="M1260.61 842.30 L1260.61 641.40" stroke="#ff0000" stroke-width="1.389" stroke-dasharray="5.14 2.22"/>
<rect x="19.50" y="641.40" width="1766.00" height="200.90" fill="none" stroke="#fff" stroke-width="1.111"/>
<path d="M19.50 842.30v4.86M264.78 842.30v4.86M510.06 842.30v4.86M755.33 842.30v4.86M1000.61 842.30v4.86M1245.89 842.30v4.86M1491.17 842.30v4.86M1736.44 842.30v4.86" stroke="#fff" stroke-width="1.111"/>
<g font-family="Liberation Sans" font-size="14.72" fill="#fff"><text x="15.08" y="861.70" textLength="8.84" lengthAdjust="spacingAndGlyphs">0</text><text x="255.94" y="861.70" textLength="17.67" lengthAdjust="spacingAndGlyphs">50</text><text x="496.80" y="861.70" textLength="26.52" lengthAdjust="spacingAndGlyphs">100</text><text x="742.08" y="861.70" textLength="26.52" lengthAdjust="spacingAndGlyphs">150</text><text x="987.35" y="861.70" textLength="26.52" lengthAdjust="spacingAndGlyphs">200</text><text x="1232.63" y="861.70" textLength="26.52" lengthAdjust="spacingAndGlyphs">250</text><text x="1477.91" y="861.70" textLength="26.52" lengthAdjust="spacingAndGlyphs">300</text><text x="1723.19" y="861.70" textLength="26.52" lengthAdjust="spacingAndGlyphs">350</text><text x="829.05" y="882.20" textLength="146.69" lengthAdjust="spacingAndGlyphs">Solar longitude (deg)</text></g>
</svg>
</body></html>
